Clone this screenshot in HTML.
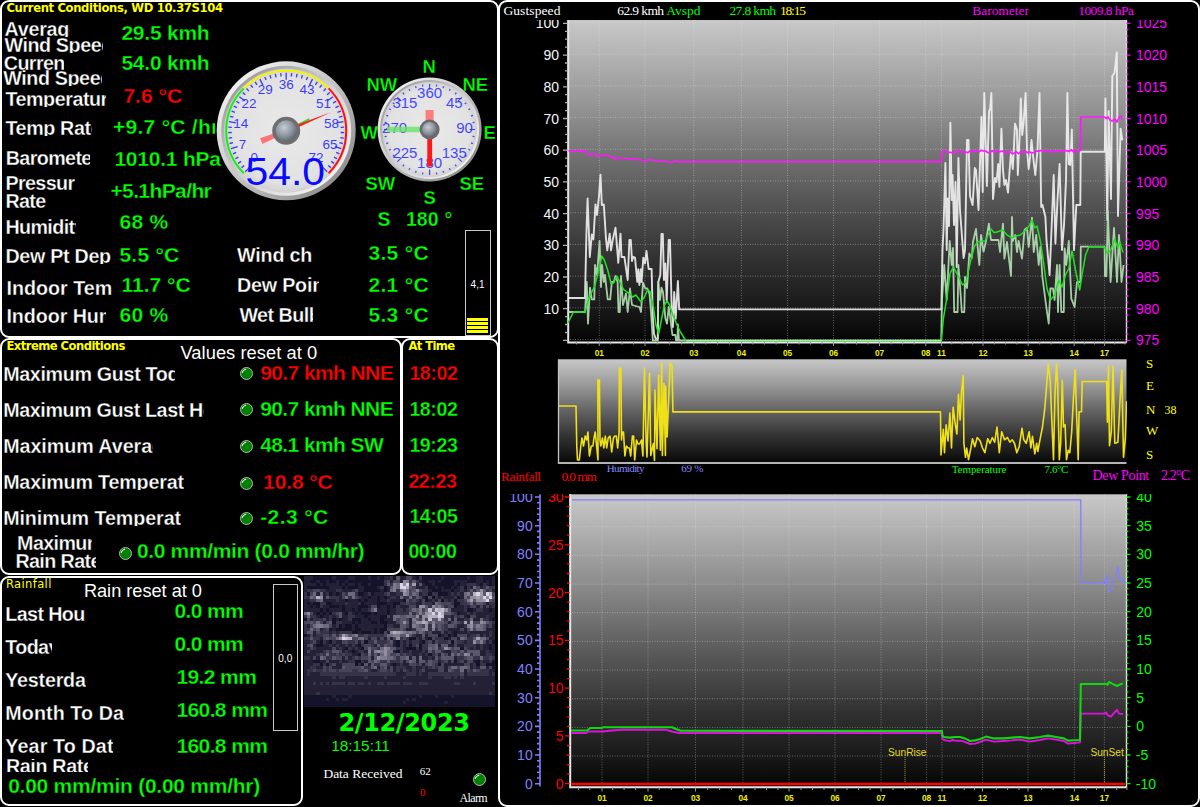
<!DOCTYPE html>
<html lang="en"><head><meta charset="utf-8"><title>Weather Display</title>
<style>
html,body{margin:0;padding:0;background:#000}
body{width:1200px;height:807px;position:relative;overflow:hidden;font-family:"Liberation Sans",Arial,sans-serif}
.t{position:absolute;white-space:nowrap}
.c{position:absolute;overflow:hidden}
.p{position:absolute;border:2px solid #fff;border-radius:9px;box-sizing:content-box}
.bx{position:absolute;border:1px solid #c8c8c8}
.led{position:absolute;width:11px;height:11px;border-radius:50%;border:1px solid #b8b0b8;background:#008200}
.led::after{content:'';position:absolute;left:1.2px;top:1.2px;width:6px;height:6px;border-radius:50%;border:1.4px solid transparent;border-top-color:#f4fff4;transform:rotate(-42deg)}
.b{-webkit-text-stroke:0.3px #000}
svg{position:absolute;left:0;top:0}
</style></head>
<body>
<svg width="200" height="140" viewBox="300 572 200 140" style="left:300px;top:572px" shape-rendering="crispEdges">
<rect x="303.5" y="576.3" width="191.5" height="130.5" fill="#15132a"/>
<path d="M303.5 576.3h3.2v3.2h-3.2zM306.7 576.3h3.2v3.2h-3.2zM309.9 576.3h3.2v3.2h-3.2zM332.3 576.3h3.2v3.2h-3.2zM348.3 576.3h3.2v3.2h-3.2zM351.5 576.3h3.2v3.2h-3.2zM367.5 576.3h3.2v3.2h-3.2zM377.1 576.3h3.2v3.2h-3.2zM383.5 576.3h3.2v3.2h-3.2zM386.7 576.3h3.2v3.2h-3.2zM399.5 576.3h3.2v3.2h-3.2zM402.7 576.3h3.2v3.2h-3.2zM412.3 576.3h3.2v3.2h-3.2zM441.1 576.3h3.2v3.2h-3.2zM466.7 576.3h3.2v3.2h-3.2zM476.3 576.3h3.2v3.2h-3.2zM479.5 576.3h3.2v3.2h-3.2zM492.3 576.3h3.2v3.2h-3.2zM303.5 579.5h3.2v3.2h-3.2zM306.7 579.5h3.2v3.2h-3.2zM316.3 579.5h3.2v3.2h-3.2zM325.9 579.5h3.2v3.2h-3.2zM335.5 579.5h3.2v3.2h-3.2zM345.1 579.5h3.2v3.2h-3.2zM389.9 579.5h3.2v3.2h-3.2zM399.5 579.5h3.2v3.2h-3.2zM418.7 579.5h3.2v3.2h-3.2zM428.3 579.5h3.2v3.2h-3.2zM431.5 579.5h3.2v3.2h-3.2zM437.9 579.5h3.2v3.2h-3.2zM453.9 579.5h3.2v3.2h-3.2zM457.1 579.5h3.2v3.2h-3.2zM460.3 579.5h3.2v3.2h-3.2zM463.5 579.5h3.2v3.2h-3.2zM476.3 579.5h3.2v3.2h-3.2zM479.5 579.5h3.2v3.2h-3.2zM485.9 579.5h3.2v3.2h-3.2zM492.3 579.5h3.2v3.2h-3.2zM303.5 582.7h3.2v3.2h-3.2zM306.7 582.7h3.2v3.2h-3.2zM309.9 582.7h3.2v3.2h-3.2zM313.1 582.7h3.2v3.2h-3.2zM319.5 582.7h3.2v3.2h-3.2zM325.9 582.7h3.2v3.2h-3.2zM329.1 582.7h3.2v3.2h-3.2zM332.3 582.7h3.2v3.2h-3.2zM335.5 582.7h3.2v3.2h-3.2zM341.9 582.7h3.2v3.2h-3.2zM348.3 582.7h3.2v3.2h-3.2zM351.5 582.7h3.2v3.2h-3.2zM357.9 582.7h3.2v3.2h-3.2zM367.5 582.7h3.2v3.2h-3.2zM415.5 582.7h3.2v3.2h-3.2zM421.9 582.7h3.2v3.2h-3.2zM431.5 582.7h3.2v3.2h-3.2zM453.9 582.7h3.2v3.2h-3.2zM460.3 582.7h3.2v3.2h-3.2zM463.5 582.7h3.2v3.2h-3.2zM476.3 582.7h3.2v3.2h-3.2zM485.9 582.7h3.2v3.2h-3.2zM492.3 582.7h3.2v3.2h-3.2zM303.5 585.9h3.2v3.2h-3.2zM329.1 585.9h3.2v3.2h-3.2zM332.3 585.9h3.2v3.2h-3.2zM335.5 585.9h3.2v3.2h-3.2zM338.7 585.9h3.2v3.2h-3.2zM345.1 585.9h3.2v3.2h-3.2zM357.9 585.9h3.2v3.2h-3.2zM361.1 585.9h3.2v3.2h-3.2zM377.1 585.9h3.2v3.2h-3.2zM386.7 585.9h3.2v3.2h-3.2zM415.5 585.9h3.2v3.2h-3.2zM418.7 585.9h3.2v3.2h-3.2zM421.9 585.9h3.2v3.2h-3.2zM434.7 585.9h3.2v3.2h-3.2zM441.1 585.9h3.2v3.2h-3.2zM450.7 585.9h3.2v3.2h-3.2zM457.1 585.9h3.2v3.2h-3.2zM469.9 585.9h3.2v3.2h-3.2zM479.5 585.9h3.2v3.2h-3.2zM303.5 589.1h3.2v3.2h-3.2zM325.9 589.1h3.2v3.2h-3.2zM329.1 589.1h3.2v3.2h-3.2zM332.3 589.1h3.2v3.2h-3.2zM341.9 589.1h3.2v3.2h-3.2zM345.1 589.1h3.2v3.2h-3.2zM348.3 589.1h3.2v3.2h-3.2zM357.9 589.1h3.2v3.2h-3.2zM361.1 589.1h3.2v3.2h-3.2zM380.3 589.1h3.2v3.2h-3.2zM386.7 589.1h3.2v3.2h-3.2zM428.3 589.1h3.2v3.2h-3.2zM441.1 589.1h3.2v3.2h-3.2zM444.3 589.1h3.2v3.2h-3.2zM447.5 589.1h3.2v3.2h-3.2zM453.9 589.1h3.2v3.2h-3.2zM457.1 589.1h3.2v3.2h-3.2zM463.5 589.1h3.2v3.2h-3.2zM492.3 589.1h3.2v3.2h-3.2zM316.3 592.3h3.2v3.2h-3.2zM322.7 592.3h3.2v3.2h-3.2zM332.3 592.3h3.2v3.2h-3.2zM338.7 592.3h3.2v3.2h-3.2zM364.3 592.3h3.2v3.2h-3.2zM373.9 592.3h3.2v3.2h-3.2zM377.1 592.3h3.2v3.2h-3.2zM380.3 592.3h3.2v3.2h-3.2zM389.9 592.3h3.2v3.2h-3.2zM393.1 592.3h3.2v3.2h-3.2zM418.7 592.3h3.2v3.2h-3.2zM447.5 592.3h3.2v3.2h-3.2zM453.9 592.3h3.2v3.2h-3.2zM460.3 592.3h3.2v3.2h-3.2zM322.7 595.5h3.2v3.2h-3.2zM338.7 595.5h3.2v3.2h-3.2zM361.1 595.5h3.2v3.2h-3.2zM364.3 595.5h3.2v3.2h-3.2zM370.7 595.5h3.2v3.2h-3.2zM373.9 595.5h3.2v3.2h-3.2zM380.3 595.5h3.2v3.2h-3.2zM386.7 595.5h3.2v3.2h-3.2zM396.3 595.5h3.2v3.2h-3.2zM421.9 595.5h3.2v3.2h-3.2zM437.9 595.5h3.2v3.2h-3.2zM444.3 595.5h3.2v3.2h-3.2zM447.5 595.5h3.2v3.2h-3.2zM450.7 595.5h3.2v3.2h-3.2zM460.3 595.5h3.2v3.2h-3.2zM303.5 598.7h3.2v3.2h-3.2zM306.7 598.7h3.2v3.2h-3.2zM322.7 598.7h3.2v3.2h-3.2zM325.9 598.7h3.2v3.2h-3.2zM329.1 598.7h3.2v3.2h-3.2zM332.3 598.7h3.2v3.2h-3.2zM338.7 598.7h3.2v3.2h-3.2zM341.9 598.7h3.2v3.2h-3.2zM348.3 598.7h3.2v3.2h-3.2zM351.5 598.7h3.2v3.2h-3.2zM354.7 598.7h3.2v3.2h-3.2zM361.1 598.7h3.2v3.2h-3.2zM367.5 598.7h3.2v3.2h-3.2zM370.7 598.7h3.2v3.2h-3.2zM373.9 598.7h3.2v3.2h-3.2zM380.3 598.7h3.2v3.2h-3.2zM383.5 598.7h3.2v3.2h-3.2zM389.9 598.7h3.2v3.2h-3.2zM393.1 598.7h3.2v3.2h-3.2zM396.3 598.7h3.2v3.2h-3.2zM399.5 598.7h3.2v3.2h-3.2zM418.7 598.7h3.2v3.2h-3.2zM428.3 598.7h3.2v3.2h-3.2zM434.7 598.7h3.2v3.2h-3.2zM447.5 598.7h3.2v3.2h-3.2zM303.5 601.9h3.2v3.2h-3.2zM309.9 601.9h3.2v3.2h-3.2zM332.3 601.9h3.2v3.2h-3.2zM335.5 601.9h3.2v3.2h-3.2zM338.7 601.9h3.2v3.2h-3.2zM341.9 601.9h3.2v3.2h-3.2zM348.3 601.9h3.2v3.2h-3.2zM351.5 601.9h3.2v3.2h-3.2zM354.7 601.9h3.2v3.2h-3.2zM364.3 601.9h3.2v3.2h-3.2zM367.5 601.9h3.2v3.2h-3.2zM370.7 601.9h3.2v3.2h-3.2zM373.9 601.9h3.2v3.2h-3.2zM386.7 601.9h3.2v3.2h-3.2zM389.9 601.9h3.2v3.2h-3.2zM415.5 601.9h3.2v3.2h-3.2zM418.7 601.9h3.2v3.2h-3.2zM431.5 601.9h3.2v3.2h-3.2zM485.9 601.9h3.2v3.2h-3.2zM303.5 605.1h3.2v3.2h-3.2zM306.7 605.1h3.2v3.2h-3.2zM313.1 605.1h3.2v3.2h-3.2zM322.7 605.1h3.2v3.2h-3.2zM325.9 605.1h3.2v3.2h-3.2zM338.7 605.1h3.2v3.2h-3.2zM345.1 605.1h3.2v3.2h-3.2zM348.3 605.1h3.2v3.2h-3.2zM351.5 605.1h3.2v3.2h-3.2zM354.7 605.1h3.2v3.2h-3.2zM367.5 605.1h3.2v3.2h-3.2zM380.3 605.1h3.2v3.2h-3.2zM383.5 605.1h3.2v3.2h-3.2zM389.9 605.1h3.2v3.2h-3.2zM399.5 605.1h3.2v3.2h-3.2zM402.7 605.1h3.2v3.2h-3.2zM405.9 605.1h3.2v3.2h-3.2zM415.5 605.1h3.2v3.2h-3.2zM457.1 605.1h3.2v3.2h-3.2zM460.3 605.1h3.2v3.2h-3.2zM466.7 605.1h3.2v3.2h-3.2zM476.3 605.1h3.2v3.2h-3.2zM482.7 605.1h3.2v3.2h-3.2zM489.1 605.1h3.2v3.2h-3.2zM303.5 608.3h3.2v3.2h-3.2zM306.7 608.3h3.2v3.2h-3.2zM309.9 608.3h3.2v3.2h-3.2zM313.1 608.3h3.2v3.2h-3.2zM316.3 608.3h3.2v3.2h-3.2zM322.7 608.3h3.2v3.2h-3.2zM329.1 608.3h3.2v3.2h-3.2zM332.3 608.3h3.2v3.2h-3.2zM335.5 608.3h3.2v3.2h-3.2zM338.7 608.3h3.2v3.2h-3.2zM345.1 608.3h3.2v3.2h-3.2zM348.3 608.3h3.2v3.2h-3.2zM354.7 608.3h3.2v3.2h-3.2zM361.1 608.3h3.2v3.2h-3.2zM364.3 608.3h3.2v3.2h-3.2zM377.1 608.3h3.2v3.2h-3.2zM380.3 608.3h3.2v3.2h-3.2zM383.5 608.3h3.2v3.2h-3.2zM389.9 608.3h3.2v3.2h-3.2zM393.1 608.3h3.2v3.2h-3.2zM402.7 608.3h3.2v3.2h-3.2zM450.7 608.3h3.2v3.2h-3.2zM453.9 608.3h3.2v3.2h-3.2zM457.1 608.3h3.2v3.2h-3.2zM460.3 608.3h3.2v3.2h-3.2zM473.1 608.3h3.2v3.2h-3.2zM482.7 608.3h3.2v3.2h-3.2zM485.9 608.3h3.2v3.2h-3.2zM492.3 608.3h3.2v3.2h-3.2zM313.1 611.5h3.2v3.2h-3.2zM319.5 611.5h3.2v3.2h-3.2zM325.9 611.5h3.2v3.2h-3.2zM341.9 611.5h3.2v3.2h-3.2zM351.5 611.5h3.2v3.2h-3.2zM357.9 611.5h3.2v3.2h-3.2zM370.7 611.5h3.2v3.2h-3.2zM377.1 611.5h3.2v3.2h-3.2zM380.3 611.5h3.2v3.2h-3.2zM383.5 611.5h3.2v3.2h-3.2zM389.9 611.5h3.2v3.2h-3.2zM393.1 611.5h3.2v3.2h-3.2zM460.3 611.5h3.2v3.2h-3.2zM463.5 611.5h3.2v3.2h-3.2zM469.9 611.5h3.2v3.2h-3.2zM476.3 611.5h3.2v3.2h-3.2zM479.5 611.5h3.2v3.2h-3.2zM482.7 611.5h3.2v3.2h-3.2zM485.9 611.5h3.2v3.2h-3.2zM489.1 611.5h3.2v3.2h-3.2zM492.3 611.5h3.2v3.2h-3.2zM316.3 614.7h3.2v3.2h-3.2zM322.7 614.7h3.2v3.2h-3.2zM325.9 614.7h3.2v3.2h-3.2zM332.3 614.7h3.2v3.2h-3.2zM341.9 614.7h3.2v3.2h-3.2zM345.1 614.7h3.2v3.2h-3.2zM354.7 614.7h3.2v3.2h-3.2zM357.9 614.7h3.2v3.2h-3.2zM361.1 614.7h3.2v3.2h-3.2zM367.5 614.7h3.2v3.2h-3.2zM370.7 614.7h3.2v3.2h-3.2zM373.9 614.7h3.2v3.2h-3.2zM377.1 614.7h3.2v3.2h-3.2zM389.9 614.7h3.2v3.2h-3.2zM450.7 614.7h3.2v3.2h-3.2zM463.5 614.7h3.2v3.2h-3.2zM476.3 614.7h3.2v3.2h-3.2zM479.5 614.7h3.2v3.2h-3.2zM482.7 614.7h3.2v3.2h-3.2zM489.1 614.7h3.2v3.2h-3.2zM492.3 614.7h3.2v3.2h-3.2zM309.9 617.9h3.2v3.2h-3.2zM325.9 617.9h3.2v3.2h-3.2zM335.5 617.9h3.2v3.2h-3.2zM341.9 617.9h3.2v3.2h-3.2zM345.1 617.9h3.2v3.2h-3.2zM361.1 617.9h3.2v3.2h-3.2zM364.3 617.9h3.2v3.2h-3.2zM370.7 617.9h3.2v3.2h-3.2zM373.9 617.9h3.2v3.2h-3.2zM377.1 617.9h3.2v3.2h-3.2zM383.5 617.9h3.2v3.2h-3.2zM386.7 617.9h3.2v3.2h-3.2zM389.9 617.9h3.2v3.2h-3.2zM409.1 617.9h3.2v3.2h-3.2zM450.7 617.9h3.2v3.2h-3.2zM457.1 617.9h3.2v3.2h-3.2zM460.3 617.9h3.2v3.2h-3.2zM473.1 617.9h3.2v3.2h-3.2zM476.3 617.9h3.2v3.2h-3.2zM489.1 617.9h3.2v3.2h-3.2zM322.7 621.1h3.2v3.2h-3.2zM341.9 621.1h3.2v3.2h-3.2zM345.1 621.1h3.2v3.2h-3.2zM348.3 621.1h3.2v3.2h-3.2zM354.7 621.1h3.2v3.2h-3.2zM361.1 621.1h3.2v3.2h-3.2zM364.3 621.1h3.2v3.2h-3.2zM367.5 621.1h3.2v3.2h-3.2zM377.1 621.1h3.2v3.2h-3.2zM386.7 621.1h3.2v3.2h-3.2zM389.9 621.1h3.2v3.2h-3.2zM393.1 621.1h3.2v3.2h-3.2zM409.1 621.1h3.2v3.2h-3.2zM447.5 621.1h3.2v3.2h-3.2zM306.7 624.3h3.2v3.2h-3.2zM332.3 624.3h3.2v3.2h-3.2zM341.9 624.3h3.2v3.2h-3.2zM351.5 624.3h3.2v3.2h-3.2zM357.9 624.3h3.2v3.2h-3.2zM361.1 624.3h3.2v3.2h-3.2zM364.3 624.3h3.2v3.2h-3.2zM367.5 624.3h3.2v3.2h-3.2zM370.7 624.3h3.2v3.2h-3.2zM373.9 624.3h3.2v3.2h-3.2zM377.1 624.3h3.2v3.2h-3.2zM380.3 624.3h3.2v3.2h-3.2zM393.1 624.3h3.2v3.2h-3.2zM396.3 624.3h3.2v3.2h-3.2zM409.1 624.3h3.2v3.2h-3.2zM457.1 624.3h3.2v3.2h-3.2zM460.3 624.3h3.2v3.2h-3.2zM492.3 624.3h3.2v3.2h-3.2zM319.5 627.5h3.2v3.2h-3.2zM332.3 627.5h3.2v3.2h-3.2zM351.5 627.5h3.2v3.2h-3.2zM361.1 627.5h3.2v3.2h-3.2zM364.3 627.5h3.2v3.2h-3.2zM367.5 627.5h3.2v3.2h-3.2zM370.7 627.5h3.2v3.2h-3.2zM377.1 627.5h3.2v3.2h-3.2zM405.9 627.5h3.2v3.2h-3.2zM409.1 627.5h3.2v3.2h-3.2zM447.5 627.5h3.2v3.2h-3.2zM450.7 627.5h3.2v3.2h-3.2zM453.9 627.5h3.2v3.2h-3.2zM457.1 627.5h3.2v3.2h-3.2zM463.5 627.5h3.2v3.2h-3.2zM485.9 627.5h3.2v3.2h-3.2zM489.1 627.5h3.2v3.2h-3.2zM492.3 627.5h3.2v3.2h-3.2zM313.1 630.7h3.2v3.2h-3.2zM329.1 630.7h3.2v3.2h-3.2zM335.5 630.7h3.2v3.2h-3.2zM357.9 630.7h3.2v3.2h-3.2zM370.7 630.7h3.2v3.2h-3.2zM377.1 630.7h3.2v3.2h-3.2zM386.7 630.7h3.2v3.2h-3.2zM431.5 630.7h3.2v3.2h-3.2zM434.7 630.7h3.2v3.2h-3.2zM437.9 630.7h3.2v3.2h-3.2zM444.3 630.7h3.2v3.2h-3.2zM450.7 630.7h3.2v3.2h-3.2zM457.1 630.7h3.2v3.2h-3.2zM460.3 630.7h3.2v3.2h-3.2zM463.5 630.7h3.2v3.2h-3.2zM469.9 630.7h3.2v3.2h-3.2zM473.1 630.7h3.2v3.2h-3.2zM476.3 630.7h3.2v3.2h-3.2zM479.5 630.7h3.2v3.2h-3.2zM482.7 630.7h3.2v3.2h-3.2zM485.9 630.7h3.2v3.2h-3.2zM492.3 630.7h3.2v3.2h-3.2zM306.7 633.9h3.2v3.2h-3.2zM313.1 633.9h3.2v3.2h-3.2zM415.5 633.9h3.2v3.2h-3.2zM418.7 633.9h3.2v3.2h-3.2zM425.1 633.9h3.2v3.2h-3.2zM441.1 633.9h3.2v3.2h-3.2zM450.7 633.9h3.2v3.2h-3.2zM466.7 633.9h3.2v3.2h-3.2zM479.5 633.9h3.2v3.2h-3.2zM485.9 633.9h3.2v3.2h-3.2zM492.3 633.9h3.2v3.2h-3.2zM319.5 637.1h3.2v3.2h-3.2zM367.5 637.1h3.2v3.2h-3.2zM377.1 637.1h3.2v3.2h-3.2zM383.5 637.1h3.2v3.2h-3.2zM389.9 637.1h3.2v3.2h-3.2zM418.7 637.1h3.2v3.2h-3.2zM425.1 637.1h3.2v3.2h-3.2zM447.5 637.1h3.2v3.2h-3.2zM457.1 637.1h3.2v3.2h-3.2zM489.1 637.1h3.2v3.2h-3.2zM492.3 637.1h3.2v3.2h-3.2zM303.5 640.3h3.2v3.2h-3.2zM306.7 640.3h3.2v3.2h-3.2zM316.3 640.3h3.2v3.2h-3.2zM325.9 640.3h3.2v3.2h-3.2zM335.5 640.3h3.2v3.2h-3.2zM338.7 640.3h3.2v3.2h-3.2zM357.9 640.3h3.2v3.2h-3.2zM393.1 640.3h3.2v3.2h-3.2zM402.7 640.3h3.2v3.2h-3.2zM409.1 640.3h3.2v3.2h-3.2zM418.7 640.3h3.2v3.2h-3.2zM431.5 640.3h3.2v3.2h-3.2zM463.5 640.3h3.2v3.2h-3.2zM485.9 640.3h3.2v3.2h-3.2zM303.5 643.5h3.2v3.2h-3.2zM313.1 643.5h3.2v3.2h-3.2zM322.7 643.5h3.2v3.2h-3.2zM325.9 643.5h3.2v3.2h-3.2zM332.3 643.5h3.2v3.2h-3.2zM338.7 643.5h3.2v3.2h-3.2zM341.9 643.5h3.2v3.2h-3.2zM348.3 643.5h3.2v3.2h-3.2zM354.7 643.5h3.2v3.2h-3.2zM373.9 643.5h3.2v3.2h-3.2zM393.1 643.5h3.2v3.2h-3.2zM402.7 643.5h3.2v3.2h-3.2zM437.9 643.5h3.2v3.2h-3.2zM447.5 643.5h3.2v3.2h-3.2zM450.7 643.5h3.2v3.2h-3.2zM457.1 643.5h3.2v3.2h-3.2zM460.3 643.5h3.2v3.2h-3.2zM476.3 643.5h3.2v3.2h-3.2zM482.7 643.5h3.2v3.2h-3.2zM485.9 643.5h3.2v3.2h-3.2zM492.3 643.5h3.2v3.2h-3.2zM303.5 646.7h3.2v3.2h-3.2zM306.7 646.7h3.2v3.2h-3.2zM316.3 646.7h3.2v3.2h-3.2zM319.5 646.7h3.2v3.2h-3.2zM322.7 646.7h3.2v3.2h-3.2zM325.9 646.7h3.2v3.2h-3.2zM329.1 646.7h3.2v3.2h-3.2zM335.5 646.7h3.2v3.2h-3.2zM341.9 646.7h3.2v3.2h-3.2zM351.5 646.7h3.2v3.2h-3.2zM357.9 646.7h3.2v3.2h-3.2zM402.7 646.7h3.2v3.2h-3.2zM469.9 646.7h3.2v3.2h-3.2zM476.3 646.7h3.2v3.2h-3.2zM482.7 646.7h3.2v3.2h-3.2zM485.9 646.7h3.2v3.2h-3.2zM492.3 646.7h3.2v3.2h-3.2zM303.5 649.9h3.2v3.2h-3.2zM309.9 649.9h3.2v3.2h-3.2zM313.1 649.9h3.2v3.2h-3.2zM316.3 649.9h3.2v3.2h-3.2zM319.5 649.9h3.2v3.2h-3.2zM341.9 649.9h3.2v3.2h-3.2zM348.3 649.9h3.2v3.2h-3.2zM354.7 649.9h3.2v3.2h-3.2zM364.3 649.9h3.2v3.2h-3.2zM393.1 649.9h3.2v3.2h-3.2zM402.7 649.9h3.2v3.2h-3.2zM405.9 649.9h3.2v3.2h-3.2zM412.3 649.9h3.2v3.2h-3.2zM415.5 649.9h3.2v3.2h-3.2zM418.7 649.9h3.2v3.2h-3.2zM425.1 649.9h3.2v3.2h-3.2zM444.3 649.9h3.2v3.2h-3.2zM447.5 649.9h3.2v3.2h-3.2zM479.5 649.9h3.2v3.2h-3.2zM482.7 649.9h3.2v3.2h-3.2zM489.1 649.9h3.2v3.2h-3.2zM492.3 649.9h3.2v3.2h-3.2zM303.5 653.1h3.2v3.2h-3.2zM306.7 653.1h3.2v3.2h-3.2zM309.9 653.1h3.2v3.2h-3.2zM313.1 653.1h3.2v3.2h-3.2zM351.5 653.1h3.2v3.2h-3.2zM354.7 653.1h3.2v3.2h-3.2zM412.3 653.1h3.2v3.2h-3.2zM415.5 653.1h3.2v3.2h-3.2zM421.9 653.1h3.2v3.2h-3.2zM437.9 653.1h3.2v3.2h-3.2zM447.5 653.1h3.2v3.2h-3.2zM479.5 653.1h3.2v3.2h-3.2zM482.7 653.1h3.2v3.2h-3.2zM492.3 653.1h3.2v3.2h-3.2zM309.9 656.3h3.2v3.2h-3.2zM316.3 656.3h3.2v3.2h-3.2zM341.9 656.3h3.2v3.2h-3.2zM348.3 656.3h3.2v3.2h-3.2zM370.7 656.3h3.2v3.2h-3.2zM409.1 656.3h3.2v3.2h-3.2zM415.5 656.3h3.2v3.2h-3.2zM421.9 656.3h3.2v3.2h-3.2zM425.1 656.3h3.2v3.2h-3.2zM431.5 656.3h3.2v3.2h-3.2zM453.9 656.3h3.2v3.2h-3.2zM303.5 659.5h3.2v3.2h-3.2zM306.7 659.5h3.2v3.2h-3.2zM309.9 659.5h3.2v3.2h-3.2zM319.5 659.5h3.2v3.2h-3.2zM322.7 659.5h3.2v3.2h-3.2zM329.1 659.5h3.2v3.2h-3.2zM332.3 659.5h3.2v3.2h-3.2zM335.5 659.5h3.2v3.2h-3.2zM341.9 659.5h3.2v3.2h-3.2zM345.1 659.5h3.2v3.2h-3.2zM364.3 659.5h3.2v3.2h-3.2zM402.7 659.5h3.2v3.2h-3.2zM415.5 659.5h3.2v3.2h-3.2zM437.9 659.5h3.2v3.2h-3.2zM447.5 659.5h3.2v3.2h-3.2zM463.5 659.5h3.2v3.2h-3.2zM473.1 659.5h3.2v3.2h-3.2zM482.7 659.5h3.2v3.2h-3.2zM485.9 659.5h3.2v3.2h-3.2zM303.5 662.7h3.2v3.2h-3.2zM306.7 662.7h3.2v3.2h-3.2zM309.9 662.7h3.2v3.2h-3.2zM335.5 662.7h3.2v3.2h-3.2zM338.7 662.7h3.2v3.2h-3.2zM367.5 662.7h3.2v3.2h-3.2zM389.9 662.7h3.2v3.2h-3.2zM396.3 662.7h3.2v3.2h-3.2zM402.7 662.7h3.2v3.2h-3.2zM405.9 662.7h3.2v3.2h-3.2zM421.9 662.7h3.2v3.2h-3.2zM444.3 662.7h3.2v3.2h-3.2zM447.5 662.7h3.2v3.2h-3.2zM450.7 662.7h3.2v3.2h-3.2zM453.9 662.7h3.2v3.2h-3.2zM457.1 662.7h3.2v3.2h-3.2zM460.3 662.7h3.2v3.2h-3.2zM469.9 662.7h3.2v3.2h-3.2zM303.5 665.9h3.2v3.2h-3.2zM306.7 665.9h3.2v3.2h-3.2zM316.3 665.9h3.2v3.2h-3.2zM319.5 665.9h3.2v3.2h-3.2zM332.3 665.9h3.2v3.2h-3.2zM335.5 665.9h3.2v3.2h-3.2zM338.7 665.9h3.2v3.2h-3.2zM377.1 665.9h3.2v3.2h-3.2zM386.7 665.9h3.2v3.2h-3.2zM393.1 665.9h3.2v3.2h-3.2zM405.9 665.9h3.2v3.2h-3.2zM409.1 665.9h3.2v3.2h-3.2zM415.5 665.9h3.2v3.2h-3.2zM418.7 665.9h3.2v3.2h-3.2zM425.1 665.9h3.2v3.2h-3.2zM444.3 665.9h3.2v3.2h-3.2zM469.9 665.9h3.2v3.2h-3.2zM476.3 665.9h3.2v3.2h-3.2zM485.9 665.9h3.2v3.2h-3.2zM303.5 669.1h3.2v3.2h-3.2zM370.7 669.1h3.2v3.2h-3.2zM373.9 669.1h3.2v3.2h-3.2zM393.1 669.1h3.2v3.2h-3.2zM399.5 669.1h3.2v3.2h-3.2zM409.1 669.1h3.2v3.2h-3.2zM415.5 669.1h3.2v3.2h-3.2zM425.1 669.1h3.2v3.2h-3.2zM428.3 669.1h3.2v3.2h-3.2zM431.5 669.1h3.2v3.2h-3.2zM434.7 669.1h3.2v3.2h-3.2zM444.3 669.1h3.2v3.2h-3.2zM463.5 669.1h3.2v3.2h-3.2zM489.1 669.1h3.2v3.2h-3.2zM492.3 669.1h3.2v3.2h-3.2zM303.5 672.3h3.2v3.2h-3.2zM309.9 672.3h3.2v3.2h-3.2zM313.1 672.3h3.2v3.2h-3.2zM316.3 672.3h3.2v3.2h-3.2zM396.3 672.3h3.2v3.2h-3.2zM399.5 672.3h3.2v3.2h-3.2zM402.7 672.3h3.2v3.2h-3.2zM415.5 672.3h3.2v3.2h-3.2zM421.9 672.3h3.2v3.2h-3.2zM425.1 672.3h3.2v3.2h-3.2zM463.5 672.3h3.2v3.2h-3.2zM489.1 672.3h3.2v3.2h-3.2zM303.5 675.5h3.2v3.2h-3.2zM306.7 675.5h3.2v3.2h-3.2zM309.9 675.5h3.2v3.2h-3.2zM313.1 675.5h3.2v3.2h-3.2zM316.3 675.5h3.2v3.2h-3.2zM319.5 675.5h3.2v3.2h-3.2zM322.7 675.5h3.2v3.2h-3.2zM325.9 675.5h3.2v3.2h-3.2zM329.1 675.5h3.2v3.2h-3.2zM335.5 675.5h3.2v3.2h-3.2zM345.1 675.5h3.2v3.2h-3.2zM348.3 675.5h3.2v3.2h-3.2zM351.5 675.5h3.2v3.2h-3.2zM354.7 675.5h3.2v3.2h-3.2zM357.9 675.5h3.2v3.2h-3.2zM361.1 675.5h3.2v3.2h-3.2zM367.5 675.5h3.2v3.2h-3.2zM370.7 675.5h3.2v3.2h-3.2zM373.9 675.5h3.2v3.2h-3.2zM377.1 675.5h3.2v3.2h-3.2zM380.3 675.5h3.2v3.2h-3.2zM386.7 675.5h3.2v3.2h-3.2zM389.9 675.5h3.2v3.2h-3.2zM393.1 675.5h3.2v3.2h-3.2zM396.3 675.5h3.2v3.2h-3.2zM399.5 675.5h3.2v3.2h-3.2zM405.9 675.5h3.2v3.2h-3.2zM409.1 675.5h3.2v3.2h-3.2zM412.3 675.5h3.2v3.2h-3.2zM415.5 675.5h3.2v3.2h-3.2zM418.7 675.5h3.2v3.2h-3.2zM421.9 675.5h3.2v3.2h-3.2zM425.1 675.5h3.2v3.2h-3.2zM431.5 675.5h3.2v3.2h-3.2zM434.7 675.5h3.2v3.2h-3.2zM437.9 675.5h3.2v3.2h-3.2zM441.1 675.5h3.2v3.2h-3.2zM450.7 675.5h3.2v3.2h-3.2zM457.1 675.5h3.2v3.2h-3.2zM463.5 675.5h3.2v3.2h-3.2zM466.7 675.5h3.2v3.2h-3.2zM469.9 675.5h3.2v3.2h-3.2zM473.1 675.5h3.2v3.2h-3.2zM476.3 675.5h3.2v3.2h-3.2zM479.5 675.5h3.2v3.2h-3.2zM482.7 675.5h3.2v3.2h-3.2zM485.9 675.5h3.2v3.2h-3.2zM489.1 675.5h3.2v3.2h-3.2zM492.3 675.5h3.2v3.2h-3.2zM303.5 678.7h3.2v3.2h-3.2zM306.7 678.7h3.2v3.2h-3.2zM309.9 678.7h3.2v3.2h-3.2zM313.1 678.7h3.2v3.2h-3.2zM316.3 678.7h3.2v3.2h-3.2zM319.5 678.7h3.2v3.2h-3.2zM322.7 678.7h3.2v3.2h-3.2zM325.9 678.7h3.2v3.2h-3.2zM329.1 678.7h3.2v3.2h-3.2zM332.3 678.7h3.2v3.2h-3.2zM335.5 678.7h3.2v3.2h-3.2zM338.7 678.7h3.2v3.2h-3.2zM341.9 678.7h3.2v3.2h-3.2zM345.1 678.7h3.2v3.2h-3.2zM348.3 678.7h3.2v3.2h-3.2zM351.5 678.7h3.2v3.2h-3.2zM354.7 678.7h3.2v3.2h-3.2zM357.9 678.7h3.2v3.2h-3.2zM361.1 678.7h3.2v3.2h-3.2zM364.3 678.7h3.2v3.2h-3.2zM367.5 678.7h3.2v3.2h-3.2zM370.7 678.7h3.2v3.2h-3.2zM373.9 678.7h3.2v3.2h-3.2zM377.1 678.7h3.2v3.2h-3.2zM380.3 678.7h3.2v3.2h-3.2zM383.5 678.7h3.2v3.2h-3.2zM386.7 678.7h3.2v3.2h-3.2zM389.9 678.7h3.2v3.2h-3.2zM393.1 678.7h3.2v3.2h-3.2zM396.3 678.7h3.2v3.2h-3.2zM399.5 678.7h3.2v3.2h-3.2zM402.7 678.7h3.2v3.2h-3.2zM405.9 678.7h3.2v3.2h-3.2zM409.1 678.7h3.2v3.2h-3.2zM412.3 678.7h3.2v3.2h-3.2zM415.5 678.7h3.2v3.2h-3.2zM418.7 678.7h3.2v3.2h-3.2zM421.9 678.7h3.2v3.2h-3.2zM425.1 678.7h3.2v3.2h-3.2zM428.3 678.7h3.2v3.2h-3.2zM431.5 678.7h3.2v3.2h-3.2zM434.7 678.7h3.2v3.2h-3.2zM437.9 678.7h3.2v3.2h-3.2zM441.1 678.7h3.2v3.2h-3.2zM444.3 678.7h3.2v3.2h-3.2zM447.5 678.7h3.2v3.2h-3.2zM450.7 678.7h3.2v3.2h-3.2zM453.9 678.7h3.2v3.2h-3.2zM457.1 678.7h3.2v3.2h-3.2zM460.3 678.7h3.2v3.2h-3.2zM463.5 678.7h3.2v3.2h-3.2zM466.7 678.7h3.2v3.2h-3.2zM469.9 678.7h3.2v3.2h-3.2zM473.1 678.7h3.2v3.2h-3.2zM476.3 678.7h3.2v3.2h-3.2zM479.5 678.7h3.2v3.2h-3.2zM482.7 678.7h3.2v3.2h-3.2zM485.9 678.7h3.2v3.2h-3.2zM489.1 678.7h3.2v3.2h-3.2zM492.3 678.7h3.2v3.2h-3.2zM303.5 681.9h3.2v3.2h-3.2zM306.7 681.9h3.2v3.2h-3.2zM309.9 681.9h3.2v3.2h-3.2zM316.3 681.9h3.2v3.2h-3.2zM322.7 681.9h3.2v3.2h-3.2zM329.1 681.9h3.2v3.2h-3.2zM345.1 681.9h3.2v3.2h-3.2zM354.7 681.9h3.2v3.2h-3.2zM364.3 681.9h3.2v3.2h-3.2zM370.7 681.9h3.2v3.2h-3.2zM373.9 681.9h3.2v3.2h-3.2zM383.5 681.9h3.2v3.2h-3.2zM399.5 681.9h3.2v3.2h-3.2zM412.3 681.9h3.2v3.2h-3.2zM415.5 681.9h3.2v3.2h-3.2zM428.3 681.9h3.2v3.2h-3.2zM431.5 681.9h3.2v3.2h-3.2zM434.7 681.9h3.2v3.2h-3.2zM437.9 681.9h3.2v3.2h-3.2zM441.1 681.9h3.2v3.2h-3.2zM444.3 681.9h3.2v3.2h-3.2zM447.5 681.9h3.2v3.2h-3.2zM450.7 681.9h3.2v3.2h-3.2zM460.3 681.9h3.2v3.2h-3.2zM463.5 681.9h3.2v3.2h-3.2zM466.7 681.9h3.2v3.2h-3.2zM469.9 681.9h3.2v3.2h-3.2zM476.3 681.9h3.2v3.2h-3.2zM479.5 681.9h3.2v3.2h-3.2zM482.7 681.9h3.2v3.2h-3.2zM485.9 681.9h3.2v3.2h-3.2zM489.1 681.9h3.2v3.2h-3.2zM303.5 685.1h3.2v3.2h-3.2zM306.7 685.1h3.2v3.2h-3.2zM309.9 685.1h3.2v3.2h-3.2zM313.1 685.1h3.2v3.2h-3.2zM316.3 685.1h3.2v3.2h-3.2zM319.5 685.1h3.2v3.2h-3.2zM322.7 685.1h3.2v3.2h-3.2zM325.9 685.1h3.2v3.2h-3.2zM329.1 685.1h3.2v3.2h-3.2zM332.3 685.1h3.2v3.2h-3.2zM335.5 685.1h3.2v3.2h-3.2zM338.7 685.1h3.2v3.2h-3.2zM341.9 685.1h3.2v3.2h-3.2zM345.1 685.1h3.2v3.2h-3.2zM348.3 685.1h3.2v3.2h-3.2zM351.5 685.1h3.2v3.2h-3.2zM354.7 685.1h3.2v3.2h-3.2zM357.9 685.1h3.2v3.2h-3.2zM361.1 685.1h3.2v3.2h-3.2zM364.3 685.1h3.2v3.2h-3.2zM367.5 685.1h3.2v3.2h-3.2zM370.7 685.1h3.2v3.2h-3.2zM373.9 685.1h3.2v3.2h-3.2zM377.1 685.1h3.2v3.2h-3.2zM380.3 685.1h3.2v3.2h-3.2zM383.5 685.1h3.2v3.2h-3.2zM386.7 685.1h3.2v3.2h-3.2zM389.9 685.1h3.2v3.2h-3.2zM393.1 685.1h3.2v3.2h-3.2zM396.3 685.1h3.2v3.2h-3.2zM399.5 685.1h3.2v3.2h-3.2zM402.7 685.1h3.2v3.2h-3.2zM405.9 685.1h3.2v3.2h-3.2zM409.1 685.1h3.2v3.2h-3.2zM412.3 685.1h3.2v3.2h-3.2zM415.5 685.1h3.2v3.2h-3.2zM418.7 685.1h3.2v3.2h-3.2zM421.9 685.1h3.2v3.2h-3.2zM425.1 685.1h3.2v3.2h-3.2zM428.3 685.1h3.2v3.2h-3.2zM431.5 685.1h3.2v3.2h-3.2zM434.7 685.1h3.2v3.2h-3.2zM437.9 685.1h3.2v3.2h-3.2zM441.1 685.1h3.2v3.2h-3.2zM444.3 685.1h3.2v3.2h-3.2zM447.5 685.1h3.2v3.2h-3.2zM450.7 685.1h3.2v3.2h-3.2zM453.9 685.1h3.2v3.2h-3.2zM457.1 685.1h3.2v3.2h-3.2zM460.3 685.1h3.2v3.2h-3.2zM463.5 685.1h3.2v3.2h-3.2zM466.7 685.1h3.2v3.2h-3.2zM469.9 685.1h3.2v3.2h-3.2zM473.1 685.1h3.2v3.2h-3.2zM476.3 685.1h3.2v3.2h-3.2zM479.5 685.1h3.2v3.2h-3.2zM482.7 685.1h3.2v3.2h-3.2zM485.9 685.1h3.2v3.2h-3.2zM489.1 685.1h3.2v3.2h-3.2zM492.3 685.1h3.2v3.2h-3.2zM303.5 688.3h3.2v3.2h-3.2zM306.7 688.3h3.2v3.2h-3.2zM309.9 688.3h3.2v3.2h-3.2zM313.1 688.3h3.2v3.2h-3.2zM316.3 688.3h3.2v3.2h-3.2zM319.5 688.3h3.2v3.2h-3.2zM322.7 688.3h3.2v3.2h-3.2zM325.9 688.3h3.2v3.2h-3.2zM329.1 688.3h3.2v3.2h-3.2zM332.3 688.3h3.2v3.2h-3.2zM335.5 688.3h3.2v3.2h-3.2zM338.7 688.3h3.2v3.2h-3.2zM341.9 688.3h3.2v3.2h-3.2zM345.1 688.3h3.2v3.2h-3.2zM348.3 688.3h3.2v3.2h-3.2zM351.5 688.3h3.2v3.2h-3.2zM354.7 688.3h3.2v3.2h-3.2zM357.9 688.3h3.2v3.2h-3.2zM361.1 688.3h3.2v3.2h-3.2zM364.3 688.3h3.2v3.2h-3.2zM367.5 688.3h3.2v3.2h-3.2zM370.7 688.3h3.2v3.2h-3.2zM373.9 688.3h3.2v3.2h-3.2zM377.1 688.3h3.2v3.2h-3.2zM380.3 688.3h3.2v3.2h-3.2zM383.5 688.3h3.2v3.2h-3.2zM386.7 688.3h3.2v3.2h-3.2zM389.9 688.3h3.2v3.2h-3.2zM393.1 688.3h3.2v3.2h-3.2zM396.3 688.3h3.2v3.2h-3.2zM399.5 688.3h3.2v3.2h-3.2zM402.7 688.3h3.2v3.2h-3.2zM405.9 688.3h3.2v3.2h-3.2zM409.1 688.3h3.2v3.2h-3.2zM412.3 688.3h3.2v3.2h-3.2zM415.5 688.3h3.2v3.2h-3.2zM418.7 688.3h3.2v3.2h-3.2zM421.9 688.3h3.2v3.2h-3.2zM425.1 688.3h3.2v3.2h-3.2zM428.3 688.3h3.2v3.2h-3.2zM431.5 688.3h3.2v3.2h-3.2zM434.7 688.3h3.2v3.2h-3.2zM437.9 688.3h3.2v3.2h-3.2zM441.1 688.3h3.2v3.2h-3.2zM444.3 688.3h3.2v3.2h-3.2zM447.5 688.3h3.2v3.2h-3.2zM450.7 688.3h3.2v3.2h-3.2zM453.9 688.3h3.2v3.2h-3.2zM457.1 688.3h3.2v3.2h-3.2zM460.3 688.3h3.2v3.2h-3.2zM463.5 688.3h3.2v3.2h-3.2zM466.7 688.3h3.2v3.2h-3.2zM469.9 688.3h3.2v3.2h-3.2zM473.1 688.3h3.2v3.2h-3.2zM476.3 688.3h3.2v3.2h-3.2zM479.5 688.3h3.2v3.2h-3.2zM482.7 688.3h3.2v3.2h-3.2zM485.9 688.3h3.2v3.2h-3.2zM489.1 688.3h3.2v3.2h-3.2zM492.3 688.3h3.2v3.2h-3.2zM303.5 691.5h3.2v3.2h-3.2zM306.7 691.5h3.2v3.2h-3.2zM309.9 691.5h3.2v3.2h-3.2zM313.1 691.5h3.2v3.2h-3.2zM319.5 691.5h3.2v3.2h-3.2zM322.7 691.5h3.2v3.2h-3.2zM325.9 691.5h3.2v3.2h-3.2zM329.1 691.5h3.2v3.2h-3.2zM332.3 691.5h3.2v3.2h-3.2zM335.5 691.5h3.2v3.2h-3.2zM338.7 691.5h3.2v3.2h-3.2zM341.9 691.5h3.2v3.2h-3.2zM345.1 691.5h3.2v3.2h-3.2zM348.3 691.5h3.2v3.2h-3.2zM351.5 691.5h3.2v3.2h-3.2zM354.7 691.5h3.2v3.2h-3.2zM357.9 691.5h3.2v3.2h-3.2zM361.1 691.5h3.2v3.2h-3.2zM364.3 691.5h3.2v3.2h-3.2zM367.5 691.5h3.2v3.2h-3.2zM370.7 691.5h3.2v3.2h-3.2zM373.9 691.5h3.2v3.2h-3.2zM377.1 691.5h3.2v3.2h-3.2zM380.3 691.5h3.2v3.2h-3.2zM383.5 691.5h3.2v3.2h-3.2zM386.7 691.5h3.2v3.2h-3.2zM389.9 691.5h3.2v3.2h-3.2zM393.1 691.5h3.2v3.2h-3.2zM396.3 691.5h3.2v3.2h-3.2zM399.5 691.5h3.2v3.2h-3.2zM402.7 691.5h3.2v3.2h-3.2zM405.9 691.5h3.2v3.2h-3.2zM409.1 691.5h3.2v3.2h-3.2zM412.3 691.5h3.2v3.2h-3.2zM415.5 691.5h3.2v3.2h-3.2zM418.7 691.5h3.2v3.2h-3.2zM421.9 691.5h3.2v3.2h-3.2zM425.1 691.5h3.2v3.2h-3.2zM428.3 691.5h3.2v3.2h-3.2zM431.5 691.5h3.2v3.2h-3.2zM434.7 691.5h3.2v3.2h-3.2zM437.9 691.5h3.2v3.2h-3.2zM441.1 691.5h3.2v3.2h-3.2zM444.3 691.5h3.2v3.2h-3.2zM447.5 691.5h3.2v3.2h-3.2zM450.7 691.5h3.2v3.2h-3.2zM453.9 691.5h3.2v3.2h-3.2zM457.1 691.5h3.2v3.2h-3.2zM460.3 691.5h3.2v3.2h-3.2zM463.5 691.5h3.2v3.2h-3.2zM466.7 691.5h3.2v3.2h-3.2zM469.9 691.5h3.2v3.2h-3.2zM473.1 691.5h3.2v3.2h-3.2zM476.3 691.5h3.2v3.2h-3.2zM479.5 691.5h3.2v3.2h-3.2zM482.7 691.5h3.2v3.2h-3.2zM485.9 691.5h3.2v3.2h-3.2zM492.3 691.5h3.2v3.2h-3.2zM332.3 694.7h3.2v3.2h-3.2zM348.3 694.7h3.2v3.2h-3.2zM418.7 694.7h3.2v3.2h-3.2zM434.7 694.7h3.2v3.2h-3.2zM450.7 694.7h3.2v3.2h-3.2zM325.9 697.9h3.2v3.2h-3.2zM335.5 697.9h3.2v3.2h-3.2zM341.9 697.9h3.2v3.2h-3.2zM345.1 697.9h3.2v3.2h-3.2zM405.9 697.9h3.2v3.2h-3.2zM412.3 697.9h3.2v3.2h-3.2zM402.7 701.1h3.2v3.2h-3.2zM444.3 701.1h3.2v3.2h-3.2z" fill="#242137"/>
<path d="M389.9 576.3h3.2v3.2h-3.2zM418.7 576.3h3.2v3.2h-3.2zM383.5 579.5h3.2v3.2h-3.2zM409.1 579.5h3.2v3.2h-3.2zM415.5 579.5h3.2v3.2h-3.2zM383.5 582.7h3.2v3.2h-3.2zM389.9 582.7h3.2v3.2h-3.2zM466.7 582.7h3.2v3.2h-3.2zM469.9 582.7h3.2v3.2h-3.2zM473.1 582.7h3.2v3.2h-3.2zM482.7 582.7h3.2v3.2h-3.2zM380.3 585.9h3.2v3.2h-3.2zM425.1 585.9h3.2v3.2h-3.2zM460.3 585.9h3.2v3.2h-3.2zM466.7 585.9h3.2v3.2h-3.2zM482.7 585.9h3.2v3.2h-3.2zM489.1 585.9h3.2v3.2h-3.2zM492.3 585.9h3.2v3.2h-3.2zM306.7 589.1h3.2v3.2h-3.2zM309.9 589.1h3.2v3.2h-3.2zM319.5 589.1h3.2v3.2h-3.2zM322.7 589.1h3.2v3.2h-3.2zM335.5 589.1h3.2v3.2h-3.2zM338.7 589.1h3.2v3.2h-3.2zM351.5 589.1h3.2v3.2h-3.2zM396.3 589.1h3.2v3.2h-3.2zM421.9 589.1h3.2v3.2h-3.2zM425.1 589.1h3.2v3.2h-3.2zM460.3 589.1h3.2v3.2h-3.2zM466.7 589.1h3.2v3.2h-3.2zM473.1 589.1h3.2v3.2h-3.2zM485.9 589.1h3.2v3.2h-3.2zM303.5 592.3h3.2v3.2h-3.2zM325.9 592.3h3.2v3.2h-3.2zM345.1 592.3h3.2v3.2h-3.2zM354.7 592.3h3.2v3.2h-3.2zM367.5 592.3h3.2v3.2h-3.2zM383.5 592.3h3.2v3.2h-3.2zM396.3 592.3h3.2v3.2h-3.2zM399.5 592.3h3.2v3.2h-3.2zM421.9 592.3h3.2v3.2h-3.2zM425.1 592.3h3.2v3.2h-3.2zM431.5 592.3h3.2v3.2h-3.2zM434.7 592.3h3.2v3.2h-3.2zM450.7 592.3h3.2v3.2h-3.2zM457.1 592.3h3.2v3.2h-3.2zM303.5 595.5h3.2v3.2h-3.2zM306.7 595.5h3.2v3.2h-3.2zM329.1 595.5h3.2v3.2h-3.2zM332.3 595.5h3.2v3.2h-3.2zM335.5 595.5h3.2v3.2h-3.2zM348.3 595.5h3.2v3.2h-3.2zM357.9 595.5h3.2v3.2h-3.2zM389.9 595.5h3.2v3.2h-3.2zM393.1 595.5h3.2v3.2h-3.2zM402.7 595.5h3.2v3.2h-3.2zM405.9 595.5h3.2v3.2h-3.2zM412.3 595.5h3.2v3.2h-3.2zM434.7 595.5h3.2v3.2h-3.2zM441.1 595.5h3.2v3.2h-3.2zM453.9 595.5h3.2v3.2h-3.2zM309.9 598.7h3.2v3.2h-3.2zM313.1 598.7h3.2v3.2h-3.2zM335.5 598.7h3.2v3.2h-3.2zM386.7 598.7h3.2v3.2h-3.2zM409.1 598.7h3.2v3.2h-3.2zM415.5 598.7h3.2v3.2h-3.2zM431.5 598.7h3.2v3.2h-3.2zM444.3 598.7h3.2v3.2h-3.2zM450.7 598.7h3.2v3.2h-3.2zM457.1 598.7h3.2v3.2h-3.2zM460.3 598.7h3.2v3.2h-3.2zM319.5 601.9h3.2v3.2h-3.2zM322.7 601.9h3.2v3.2h-3.2zM345.1 601.9h3.2v3.2h-3.2zM357.9 601.9h3.2v3.2h-3.2zM399.5 601.9h3.2v3.2h-3.2zM402.7 601.9h3.2v3.2h-3.2zM409.1 601.9h3.2v3.2h-3.2zM412.3 601.9h3.2v3.2h-3.2zM425.1 601.9h3.2v3.2h-3.2zM428.3 601.9h3.2v3.2h-3.2zM450.7 601.9h3.2v3.2h-3.2zM460.3 601.9h3.2v3.2h-3.2zM463.5 601.9h3.2v3.2h-3.2zM473.1 601.9h3.2v3.2h-3.2zM489.1 601.9h3.2v3.2h-3.2zM492.3 601.9h3.2v3.2h-3.2zM319.5 605.1h3.2v3.2h-3.2zM396.3 605.1h3.2v3.2h-3.2zM428.3 605.1h3.2v3.2h-3.2zM444.3 605.1h3.2v3.2h-3.2zM463.5 605.1h3.2v3.2h-3.2zM492.3 605.1h3.2v3.2h-3.2zM367.5 608.3h3.2v3.2h-3.2zM396.3 608.3h3.2v3.2h-3.2zM399.5 608.3h3.2v3.2h-3.2zM405.9 608.3h3.2v3.2h-3.2zM463.5 608.3h3.2v3.2h-3.2zM476.3 608.3h3.2v3.2h-3.2zM479.5 608.3h3.2v3.2h-3.2zM332.3 611.5h3.2v3.2h-3.2zM348.3 611.5h3.2v3.2h-3.2zM396.3 611.5h3.2v3.2h-3.2zM399.5 611.5h3.2v3.2h-3.2zM402.7 611.5h3.2v3.2h-3.2zM405.9 611.5h3.2v3.2h-3.2zM412.3 611.5h3.2v3.2h-3.2zM453.9 611.5h3.2v3.2h-3.2zM466.7 611.5h3.2v3.2h-3.2zM473.1 611.5h3.2v3.2h-3.2zM303.5 614.7h3.2v3.2h-3.2zM309.9 614.7h3.2v3.2h-3.2zM313.1 614.7h3.2v3.2h-3.2zM329.1 614.7h3.2v3.2h-3.2zM335.5 614.7h3.2v3.2h-3.2zM348.3 614.7h3.2v3.2h-3.2zM351.5 614.7h3.2v3.2h-3.2zM418.7 614.7h3.2v3.2h-3.2zM444.3 614.7h3.2v3.2h-3.2zM447.5 614.7h3.2v3.2h-3.2zM457.1 614.7h3.2v3.2h-3.2zM485.9 614.7h3.2v3.2h-3.2zM313.1 617.9h3.2v3.2h-3.2zM316.3 617.9h3.2v3.2h-3.2zM319.5 617.9h3.2v3.2h-3.2zM329.1 617.9h3.2v3.2h-3.2zM348.3 617.9h3.2v3.2h-3.2zM444.3 617.9h3.2v3.2h-3.2zM463.5 617.9h3.2v3.2h-3.2zM466.7 617.9h3.2v3.2h-3.2zM482.7 617.9h3.2v3.2h-3.2zM485.9 617.9h3.2v3.2h-3.2zM335.5 621.1h3.2v3.2h-3.2zM338.7 621.1h3.2v3.2h-3.2zM460.3 621.1h3.2v3.2h-3.2zM466.7 621.1h3.2v3.2h-3.2zM492.3 621.1h3.2v3.2h-3.2zM303.5 624.3h3.2v3.2h-3.2zM335.5 624.3h3.2v3.2h-3.2zM386.7 624.3h3.2v3.2h-3.2zM389.9 624.3h3.2v3.2h-3.2zM428.3 624.3h3.2v3.2h-3.2zM444.3 624.3h3.2v3.2h-3.2zM463.5 624.3h3.2v3.2h-3.2zM485.9 624.3h3.2v3.2h-3.2zM303.5 627.5h3.2v3.2h-3.2zM306.7 627.5h3.2v3.2h-3.2zM322.7 627.5h3.2v3.2h-3.2zM412.3 627.5h3.2v3.2h-3.2zM428.3 627.5h3.2v3.2h-3.2zM434.7 627.5h3.2v3.2h-3.2zM444.3 627.5h3.2v3.2h-3.2zM303.5 630.7h3.2v3.2h-3.2zM319.5 630.7h3.2v3.2h-3.2zM322.7 630.7h3.2v3.2h-3.2zM325.9 630.7h3.2v3.2h-3.2zM332.3 630.7h3.2v3.2h-3.2zM338.7 630.7h3.2v3.2h-3.2zM341.9 630.7h3.2v3.2h-3.2zM345.1 630.7h3.2v3.2h-3.2zM348.3 630.7h3.2v3.2h-3.2zM425.1 630.7h3.2v3.2h-3.2zM447.5 630.7h3.2v3.2h-3.2zM466.7 630.7h3.2v3.2h-3.2zM489.1 630.7h3.2v3.2h-3.2zM316.3 633.9h3.2v3.2h-3.2zM319.5 633.9h3.2v3.2h-3.2zM329.1 633.9h3.2v3.2h-3.2zM335.5 633.9h3.2v3.2h-3.2zM357.9 633.9h3.2v3.2h-3.2zM361.1 633.9h3.2v3.2h-3.2zM367.5 633.9h3.2v3.2h-3.2zM370.7 633.9h3.2v3.2h-3.2zM373.9 633.9h3.2v3.2h-3.2zM377.1 633.9h3.2v3.2h-3.2zM380.3 633.9h3.2v3.2h-3.2zM412.3 633.9h3.2v3.2h-3.2zM444.3 633.9h3.2v3.2h-3.2zM469.9 633.9h3.2v3.2h-3.2zM473.1 633.9h3.2v3.2h-3.2zM482.7 633.9h3.2v3.2h-3.2zM489.1 633.9h3.2v3.2h-3.2zM303.5 637.1h3.2v3.2h-3.2zM306.7 637.1h3.2v3.2h-3.2zM313.1 637.1h3.2v3.2h-3.2zM316.3 637.1h3.2v3.2h-3.2zM399.5 637.1h3.2v3.2h-3.2zM405.9 637.1h3.2v3.2h-3.2zM415.5 637.1h3.2v3.2h-3.2zM434.7 637.1h3.2v3.2h-3.2zM437.9 637.1h3.2v3.2h-3.2zM441.1 637.1h3.2v3.2h-3.2zM466.7 637.1h3.2v3.2h-3.2zM469.9 637.1h3.2v3.2h-3.2zM309.9 640.3h3.2v3.2h-3.2zM322.7 640.3h3.2v3.2h-3.2zM332.3 640.3h3.2v3.2h-3.2zM348.3 640.3h3.2v3.2h-3.2zM351.5 640.3h3.2v3.2h-3.2zM367.5 640.3h3.2v3.2h-3.2zM370.7 640.3h3.2v3.2h-3.2zM377.1 640.3h3.2v3.2h-3.2zM380.3 640.3h3.2v3.2h-3.2zM383.5 640.3h3.2v3.2h-3.2zM399.5 640.3h3.2v3.2h-3.2zM405.9 640.3h3.2v3.2h-3.2zM412.3 640.3h3.2v3.2h-3.2zM415.5 640.3h3.2v3.2h-3.2zM425.1 640.3h3.2v3.2h-3.2zM437.9 640.3h3.2v3.2h-3.2zM441.1 640.3h3.2v3.2h-3.2zM444.3 640.3h3.2v3.2h-3.2zM457.1 640.3h3.2v3.2h-3.2zM460.3 640.3h3.2v3.2h-3.2zM466.7 640.3h3.2v3.2h-3.2zM469.9 640.3h3.2v3.2h-3.2zM489.1 640.3h3.2v3.2h-3.2zM329.1 643.5h3.2v3.2h-3.2zM335.5 643.5h3.2v3.2h-3.2zM345.1 643.5h3.2v3.2h-3.2zM351.5 643.5h3.2v3.2h-3.2zM361.1 643.5h3.2v3.2h-3.2zM370.7 643.5h3.2v3.2h-3.2zM380.3 643.5h3.2v3.2h-3.2zM399.5 643.5h3.2v3.2h-3.2zM405.9 643.5h3.2v3.2h-3.2zM412.3 643.5h3.2v3.2h-3.2zM421.9 643.5h3.2v3.2h-3.2zM425.1 643.5h3.2v3.2h-3.2zM463.5 643.5h3.2v3.2h-3.2zM466.7 643.5h3.2v3.2h-3.2zM469.9 643.5h3.2v3.2h-3.2zM473.1 643.5h3.2v3.2h-3.2zM479.5 643.5h3.2v3.2h-3.2zM313.1 646.7h3.2v3.2h-3.2zM338.7 646.7h3.2v3.2h-3.2zM348.3 646.7h3.2v3.2h-3.2zM354.7 646.7h3.2v3.2h-3.2zM377.1 646.7h3.2v3.2h-3.2zM396.3 646.7h3.2v3.2h-3.2zM399.5 646.7h3.2v3.2h-3.2zM415.5 646.7h3.2v3.2h-3.2zM421.9 646.7h3.2v3.2h-3.2zM425.1 646.7h3.2v3.2h-3.2zM437.9 646.7h3.2v3.2h-3.2zM466.7 646.7h3.2v3.2h-3.2zM473.1 646.7h3.2v3.2h-3.2zM479.5 646.7h3.2v3.2h-3.2zM322.7 649.9h3.2v3.2h-3.2zM329.1 649.9h3.2v3.2h-3.2zM345.1 649.9h3.2v3.2h-3.2zM357.9 649.9h3.2v3.2h-3.2zM361.1 649.9h3.2v3.2h-3.2zM370.7 649.9h3.2v3.2h-3.2zM399.5 649.9h3.2v3.2h-3.2zM409.1 649.9h3.2v3.2h-3.2zM421.9 649.9h3.2v3.2h-3.2zM431.5 649.9h3.2v3.2h-3.2zM441.1 649.9h3.2v3.2h-3.2zM457.1 649.9h3.2v3.2h-3.2zM463.5 649.9h3.2v3.2h-3.2zM485.9 649.9h3.2v3.2h-3.2zM316.3 653.1h3.2v3.2h-3.2zM322.7 653.1h3.2v3.2h-3.2zM329.1 653.1h3.2v3.2h-3.2zM332.3 653.1h3.2v3.2h-3.2zM338.7 653.1h3.2v3.2h-3.2zM345.1 653.1h3.2v3.2h-3.2zM348.3 653.1h3.2v3.2h-3.2zM364.3 653.1h3.2v3.2h-3.2zM370.7 653.1h3.2v3.2h-3.2zM377.1 653.1h3.2v3.2h-3.2zM399.5 653.1h3.2v3.2h-3.2zM405.9 653.1h3.2v3.2h-3.2zM409.1 653.1h3.2v3.2h-3.2zM418.7 653.1h3.2v3.2h-3.2zM425.1 653.1h3.2v3.2h-3.2zM431.5 653.1h3.2v3.2h-3.2zM469.9 653.1h3.2v3.2h-3.2zM485.9 653.1h3.2v3.2h-3.2zM489.1 653.1h3.2v3.2h-3.2zM303.5 656.3h3.2v3.2h-3.2zM306.7 656.3h3.2v3.2h-3.2zM325.9 656.3h3.2v3.2h-3.2zM329.1 656.3h3.2v3.2h-3.2zM351.5 656.3h3.2v3.2h-3.2zM357.9 656.3h3.2v3.2h-3.2zM396.3 656.3h3.2v3.2h-3.2zM428.3 656.3h3.2v3.2h-3.2zM437.9 656.3h3.2v3.2h-3.2zM457.1 656.3h3.2v3.2h-3.2zM460.3 656.3h3.2v3.2h-3.2zM473.1 656.3h3.2v3.2h-3.2zM476.3 656.3h3.2v3.2h-3.2zM482.7 656.3h3.2v3.2h-3.2zM485.9 656.3h3.2v3.2h-3.2zM492.3 656.3h3.2v3.2h-3.2zM338.7 659.5h3.2v3.2h-3.2zM348.3 659.5h3.2v3.2h-3.2zM351.5 659.5h3.2v3.2h-3.2zM361.1 659.5h3.2v3.2h-3.2zM380.3 659.5h3.2v3.2h-3.2zM383.5 659.5h3.2v3.2h-3.2zM389.9 659.5h3.2v3.2h-3.2zM393.1 659.5h3.2v3.2h-3.2zM396.3 659.5h3.2v3.2h-3.2zM425.1 659.5h3.2v3.2h-3.2zM441.1 659.5h3.2v3.2h-3.2zM457.1 659.5h3.2v3.2h-3.2zM479.5 659.5h3.2v3.2h-3.2zM489.1 659.5h3.2v3.2h-3.2zM313.1 662.7h3.2v3.2h-3.2zM316.3 662.7h3.2v3.2h-3.2zM322.7 662.7h3.2v3.2h-3.2zM329.1 662.7h3.2v3.2h-3.2zM357.9 662.7h3.2v3.2h-3.2zM373.9 662.7h3.2v3.2h-3.2zM377.1 662.7h3.2v3.2h-3.2zM386.7 662.7h3.2v3.2h-3.2zM399.5 662.7h3.2v3.2h-3.2zM415.5 662.7h3.2v3.2h-3.2zM434.7 662.7h3.2v3.2h-3.2zM473.1 662.7h3.2v3.2h-3.2zM479.5 662.7h3.2v3.2h-3.2zM482.7 662.7h3.2v3.2h-3.2zM309.9 665.9h3.2v3.2h-3.2zM313.1 665.9h3.2v3.2h-3.2zM325.9 665.9h3.2v3.2h-3.2zM364.3 665.9h3.2v3.2h-3.2zM367.5 665.9h3.2v3.2h-3.2zM396.3 665.9h3.2v3.2h-3.2zM399.5 665.9h3.2v3.2h-3.2zM402.7 665.9h3.2v3.2h-3.2zM412.3 665.9h3.2v3.2h-3.2zM421.9 665.9h3.2v3.2h-3.2zM428.3 665.9h3.2v3.2h-3.2zM434.7 665.9h3.2v3.2h-3.2zM473.1 665.9h3.2v3.2h-3.2zM306.7 669.1h3.2v3.2h-3.2zM309.9 669.1h3.2v3.2h-3.2zM316.3 669.1h3.2v3.2h-3.2zM319.5 669.1h3.2v3.2h-3.2zM325.9 669.1h3.2v3.2h-3.2zM335.5 669.1h3.2v3.2h-3.2zM351.5 669.1h3.2v3.2h-3.2zM354.7 669.1h3.2v3.2h-3.2zM367.5 669.1h3.2v3.2h-3.2zM377.1 669.1h3.2v3.2h-3.2zM386.7 669.1h3.2v3.2h-3.2zM396.3 669.1h3.2v3.2h-3.2zM405.9 669.1h3.2v3.2h-3.2zM412.3 669.1h3.2v3.2h-3.2zM418.7 669.1h3.2v3.2h-3.2zM453.9 669.1h3.2v3.2h-3.2zM457.1 669.1h3.2v3.2h-3.2zM469.9 669.1h3.2v3.2h-3.2zM479.5 669.1h3.2v3.2h-3.2zM482.7 669.1h3.2v3.2h-3.2zM485.9 669.1h3.2v3.2h-3.2zM306.7 672.3h3.2v3.2h-3.2zM319.5 672.3h3.2v3.2h-3.2zM322.7 672.3h3.2v3.2h-3.2zM325.9 672.3h3.2v3.2h-3.2zM329.1 672.3h3.2v3.2h-3.2zM332.3 672.3h3.2v3.2h-3.2zM335.5 672.3h3.2v3.2h-3.2zM338.7 672.3h3.2v3.2h-3.2zM341.9 672.3h3.2v3.2h-3.2zM345.1 672.3h3.2v3.2h-3.2zM348.3 672.3h3.2v3.2h-3.2zM351.5 672.3h3.2v3.2h-3.2zM354.7 672.3h3.2v3.2h-3.2zM357.9 672.3h3.2v3.2h-3.2zM361.1 672.3h3.2v3.2h-3.2zM364.3 672.3h3.2v3.2h-3.2zM367.5 672.3h3.2v3.2h-3.2zM370.7 672.3h3.2v3.2h-3.2zM373.9 672.3h3.2v3.2h-3.2zM377.1 672.3h3.2v3.2h-3.2zM380.3 672.3h3.2v3.2h-3.2zM383.5 672.3h3.2v3.2h-3.2zM386.7 672.3h3.2v3.2h-3.2zM389.9 672.3h3.2v3.2h-3.2zM393.1 672.3h3.2v3.2h-3.2zM405.9 672.3h3.2v3.2h-3.2zM409.1 672.3h3.2v3.2h-3.2zM412.3 672.3h3.2v3.2h-3.2zM418.7 672.3h3.2v3.2h-3.2zM428.3 672.3h3.2v3.2h-3.2zM431.5 672.3h3.2v3.2h-3.2zM434.7 672.3h3.2v3.2h-3.2zM437.9 672.3h3.2v3.2h-3.2zM441.1 672.3h3.2v3.2h-3.2zM444.3 672.3h3.2v3.2h-3.2zM447.5 672.3h3.2v3.2h-3.2zM450.7 672.3h3.2v3.2h-3.2zM453.9 672.3h3.2v3.2h-3.2zM457.1 672.3h3.2v3.2h-3.2zM466.7 672.3h3.2v3.2h-3.2zM469.9 672.3h3.2v3.2h-3.2zM473.1 672.3h3.2v3.2h-3.2zM476.3 672.3h3.2v3.2h-3.2zM479.5 672.3h3.2v3.2h-3.2zM482.7 672.3h3.2v3.2h-3.2zM485.9 672.3h3.2v3.2h-3.2zM492.3 672.3h3.2v3.2h-3.2zM332.3 675.5h3.2v3.2h-3.2zM338.7 675.5h3.2v3.2h-3.2zM341.9 675.5h3.2v3.2h-3.2zM364.3 675.5h3.2v3.2h-3.2zM383.5 675.5h3.2v3.2h-3.2zM402.7 675.5h3.2v3.2h-3.2zM428.3 675.5h3.2v3.2h-3.2zM444.3 675.5h3.2v3.2h-3.2zM447.5 675.5h3.2v3.2h-3.2zM453.9 675.5h3.2v3.2h-3.2zM460.3 675.5h3.2v3.2h-3.2zM313.1 681.9h3.2v3.2h-3.2zM319.5 681.9h3.2v3.2h-3.2zM325.9 681.9h3.2v3.2h-3.2zM332.3 681.9h3.2v3.2h-3.2zM335.5 681.9h3.2v3.2h-3.2zM338.7 681.9h3.2v3.2h-3.2zM341.9 681.9h3.2v3.2h-3.2zM348.3 681.9h3.2v3.2h-3.2zM351.5 681.9h3.2v3.2h-3.2zM357.9 681.9h3.2v3.2h-3.2zM361.1 681.9h3.2v3.2h-3.2zM367.5 681.9h3.2v3.2h-3.2zM377.1 681.9h3.2v3.2h-3.2zM380.3 681.9h3.2v3.2h-3.2zM386.7 681.9h3.2v3.2h-3.2zM389.9 681.9h3.2v3.2h-3.2zM393.1 681.9h3.2v3.2h-3.2zM396.3 681.9h3.2v3.2h-3.2zM402.7 681.9h3.2v3.2h-3.2zM405.9 681.9h3.2v3.2h-3.2zM409.1 681.9h3.2v3.2h-3.2zM418.7 681.9h3.2v3.2h-3.2zM421.9 681.9h3.2v3.2h-3.2zM425.1 681.9h3.2v3.2h-3.2zM453.9 681.9h3.2v3.2h-3.2zM457.1 681.9h3.2v3.2h-3.2zM473.1 681.9h3.2v3.2h-3.2zM492.3 681.9h3.2v3.2h-3.2zM316.3 691.5h3.2v3.2h-3.2zM489.1 691.5h3.2v3.2h-3.2z" fill="#363348"/>
<path d="M405.9 576.3h3.2v3.2h-3.2zM409.1 576.3h3.2v3.2h-3.2zM386.7 579.5h3.2v3.2h-3.2zM393.1 579.5h3.2v3.2h-3.2zM396.3 579.5h3.2v3.2h-3.2zM409.1 582.7h3.2v3.2h-3.2zM412.3 585.9h3.2v3.2h-3.2zM476.3 585.9h3.2v3.2h-3.2zM313.1 589.1h3.2v3.2h-3.2zM316.3 589.1h3.2v3.2h-3.2zM354.7 589.1h3.2v3.2h-3.2zM409.1 589.1h3.2v3.2h-3.2zM418.7 589.1h3.2v3.2h-3.2zM489.1 589.1h3.2v3.2h-3.2zM309.9 592.3h3.2v3.2h-3.2zM341.9 592.3h3.2v3.2h-3.2zM386.7 592.3h3.2v3.2h-3.2zM409.1 592.3h3.2v3.2h-3.2zM469.9 592.3h3.2v3.2h-3.2zM492.3 592.3h3.2v3.2h-3.2zM341.9 595.5h3.2v3.2h-3.2zM354.7 595.5h3.2v3.2h-3.2zM418.7 595.5h3.2v3.2h-3.2zM428.3 595.5h3.2v3.2h-3.2zM466.7 595.5h3.2v3.2h-3.2zM412.3 598.7h3.2v3.2h-3.2zM421.9 598.7h3.2v3.2h-3.2zM437.9 598.7h3.2v3.2h-3.2zM463.5 598.7h3.2v3.2h-3.2zM492.3 598.7h3.2v3.2h-3.2zM405.9 601.9h3.2v3.2h-3.2zM421.9 601.9h3.2v3.2h-3.2zM441.1 601.9h3.2v3.2h-3.2zM444.3 601.9h3.2v3.2h-3.2zM447.5 601.9h3.2v3.2h-3.2zM466.7 601.9h3.2v3.2h-3.2zM482.7 601.9h3.2v3.2h-3.2zM370.7 605.1h3.2v3.2h-3.2zM373.9 605.1h3.2v3.2h-3.2zM409.1 605.1h3.2v3.2h-3.2zM412.3 605.1h3.2v3.2h-3.2zM447.5 605.1h3.2v3.2h-3.2zM450.7 605.1h3.2v3.2h-3.2zM469.9 605.1h3.2v3.2h-3.2zM473.1 605.1h3.2v3.2h-3.2zM479.5 605.1h3.2v3.2h-3.2zM485.9 605.1h3.2v3.2h-3.2zM409.1 608.3h3.2v3.2h-3.2zM421.9 608.3h3.2v3.2h-3.2zM309.9 611.5h3.2v3.2h-3.2zM335.5 611.5h3.2v3.2h-3.2zM450.7 611.5h3.2v3.2h-3.2zM386.7 614.7h3.2v3.2h-3.2zM453.9 614.7h3.2v3.2h-3.2zM460.3 614.7h3.2v3.2h-3.2zM469.9 614.7h3.2v3.2h-3.2zM473.1 614.7h3.2v3.2h-3.2zM306.7 617.9h3.2v3.2h-3.2zM322.7 617.9h3.2v3.2h-3.2zM396.3 617.9h3.2v3.2h-3.2zM405.9 617.9h3.2v3.2h-3.2zM418.7 617.9h3.2v3.2h-3.2zM425.1 617.9h3.2v3.2h-3.2zM303.5 621.1h3.2v3.2h-3.2zM306.7 621.1h3.2v3.2h-3.2zM313.1 621.1h3.2v3.2h-3.2zM319.5 621.1h3.2v3.2h-3.2zM325.9 621.1h3.2v3.2h-3.2zM396.3 621.1h3.2v3.2h-3.2zM444.3 621.1h3.2v3.2h-3.2zM450.7 621.1h3.2v3.2h-3.2zM457.1 621.1h3.2v3.2h-3.2zM473.1 621.1h3.2v3.2h-3.2zM476.3 621.1h3.2v3.2h-3.2zM489.1 621.1h3.2v3.2h-3.2zM309.9 624.3h3.2v3.2h-3.2zM329.1 624.3h3.2v3.2h-3.2zM405.9 624.3h3.2v3.2h-3.2zM421.9 624.3h3.2v3.2h-3.2zM434.7 624.3h3.2v3.2h-3.2zM441.1 624.3h3.2v3.2h-3.2zM453.9 624.3h3.2v3.2h-3.2zM489.1 624.3h3.2v3.2h-3.2zM313.1 627.5h3.2v3.2h-3.2zM325.9 627.5h3.2v3.2h-3.2zM386.7 627.5h3.2v3.2h-3.2zM389.9 627.5h3.2v3.2h-3.2zM393.1 627.5h3.2v3.2h-3.2zM396.3 627.5h3.2v3.2h-3.2zM402.7 627.5h3.2v3.2h-3.2zM441.1 627.5h3.2v3.2h-3.2zM460.3 627.5h3.2v3.2h-3.2zM466.7 627.5h3.2v3.2h-3.2zM473.1 627.5h3.2v3.2h-3.2zM316.3 630.7h3.2v3.2h-3.2zM383.5 630.7h3.2v3.2h-3.2zM415.5 630.7h3.2v3.2h-3.2zM428.3 630.7h3.2v3.2h-3.2zM441.1 630.7h3.2v3.2h-3.2zM309.9 633.9h3.2v3.2h-3.2zM322.7 633.9h3.2v3.2h-3.2zM325.9 633.9h3.2v3.2h-3.2zM364.3 633.9h3.2v3.2h-3.2zM383.5 633.9h3.2v3.2h-3.2zM428.3 633.9h3.2v3.2h-3.2zM431.5 633.9h3.2v3.2h-3.2zM434.7 633.9h3.2v3.2h-3.2zM457.1 633.9h3.2v3.2h-3.2zM460.3 633.9h3.2v3.2h-3.2zM463.5 633.9h3.2v3.2h-3.2zM476.3 633.9h3.2v3.2h-3.2zM322.7 637.1h3.2v3.2h-3.2zM329.1 637.1h3.2v3.2h-3.2zM332.3 637.1h3.2v3.2h-3.2zM351.5 637.1h3.2v3.2h-3.2zM354.7 637.1h3.2v3.2h-3.2zM364.3 637.1h3.2v3.2h-3.2zM370.7 637.1h3.2v3.2h-3.2zM373.9 637.1h3.2v3.2h-3.2zM380.3 637.1h3.2v3.2h-3.2zM393.1 637.1h3.2v3.2h-3.2zM402.7 637.1h3.2v3.2h-3.2zM421.9 637.1h3.2v3.2h-3.2zM431.5 637.1h3.2v3.2h-3.2zM450.7 637.1h3.2v3.2h-3.2zM453.9 637.1h3.2v3.2h-3.2zM485.9 637.1h3.2v3.2h-3.2zM313.1 640.3h3.2v3.2h-3.2zM341.9 640.3h3.2v3.2h-3.2zM345.1 640.3h3.2v3.2h-3.2zM354.7 640.3h3.2v3.2h-3.2zM361.1 640.3h3.2v3.2h-3.2zM386.7 640.3h3.2v3.2h-3.2zM428.3 640.3h3.2v3.2h-3.2zM434.7 640.3h3.2v3.2h-3.2zM447.5 640.3h3.2v3.2h-3.2zM453.9 640.3h3.2v3.2h-3.2zM482.7 640.3h3.2v3.2h-3.2zM306.7 643.5h3.2v3.2h-3.2zM364.3 643.5h3.2v3.2h-3.2zM367.5 643.5h3.2v3.2h-3.2zM386.7 643.5h3.2v3.2h-3.2zM389.9 643.5h3.2v3.2h-3.2zM415.5 643.5h3.2v3.2h-3.2zM453.9 643.5h3.2v3.2h-3.2zM309.9 646.7h3.2v3.2h-3.2zM332.3 646.7h3.2v3.2h-3.2zM364.3 646.7h3.2v3.2h-3.2zM370.7 646.7h3.2v3.2h-3.2zM373.9 646.7h3.2v3.2h-3.2zM441.1 646.7h3.2v3.2h-3.2zM450.7 646.7h3.2v3.2h-3.2zM463.5 646.7h3.2v3.2h-3.2zM306.7 649.9h3.2v3.2h-3.2zM325.9 649.9h3.2v3.2h-3.2zM338.7 649.9h3.2v3.2h-3.2zM450.7 649.9h3.2v3.2h-3.2zM453.9 649.9h3.2v3.2h-3.2zM319.5 653.1h3.2v3.2h-3.2zM335.5 653.1h3.2v3.2h-3.2zM341.9 653.1h3.2v3.2h-3.2zM361.1 653.1h3.2v3.2h-3.2zM389.9 653.1h3.2v3.2h-3.2zM393.1 653.1h3.2v3.2h-3.2zM402.7 653.1h3.2v3.2h-3.2zM434.7 653.1h3.2v3.2h-3.2zM444.3 653.1h3.2v3.2h-3.2zM453.9 653.1h3.2v3.2h-3.2zM460.3 653.1h3.2v3.2h-3.2zM313.1 656.3h3.2v3.2h-3.2zM335.5 656.3h3.2v3.2h-3.2zM338.7 656.3h3.2v3.2h-3.2zM345.1 656.3h3.2v3.2h-3.2zM354.7 656.3h3.2v3.2h-3.2zM361.1 656.3h3.2v3.2h-3.2zM364.3 656.3h3.2v3.2h-3.2zM463.5 656.3h3.2v3.2h-3.2zM489.1 656.3h3.2v3.2h-3.2zM325.9 659.5h3.2v3.2h-3.2zM370.7 659.5h3.2v3.2h-3.2zM399.5 659.5h3.2v3.2h-3.2zM405.9 659.5h3.2v3.2h-3.2zM431.5 659.5h3.2v3.2h-3.2zM434.7 659.5h3.2v3.2h-3.2zM444.3 659.5h3.2v3.2h-3.2zM450.7 659.5h3.2v3.2h-3.2zM460.3 659.5h3.2v3.2h-3.2zM466.7 659.5h3.2v3.2h-3.2zM469.9 659.5h3.2v3.2h-3.2zM332.3 662.7h3.2v3.2h-3.2zM341.9 662.7h3.2v3.2h-3.2zM345.1 662.7h3.2v3.2h-3.2zM348.3 662.7h3.2v3.2h-3.2zM351.5 662.7h3.2v3.2h-3.2zM409.1 662.7h3.2v3.2h-3.2zM412.3 662.7h3.2v3.2h-3.2zM418.7 662.7h3.2v3.2h-3.2zM425.1 662.7h3.2v3.2h-3.2zM431.5 662.7h3.2v3.2h-3.2zM441.1 662.7h3.2v3.2h-3.2zM463.5 662.7h3.2v3.2h-3.2zM466.7 662.7h3.2v3.2h-3.2zM322.7 665.9h3.2v3.2h-3.2zM329.1 665.9h3.2v3.2h-3.2zM345.1 665.9h3.2v3.2h-3.2zM348.3 665.9h3.2v3.2h-3.2zM351.5 665.9h3.2v3.2h-3.2zM354.7 665.9h3.2v3.2h-3.2zM357.9 665.9h3.2v3.2h-3.2zM380.3 665.9h3.2v3.2h-3.2zM389.9 665.9h3.2v3.2h-3.2zM431.5 665.9h3.2v3.2h-3.2zM437.9 665.9h3.2v3.2h-3.2zM441.1 665.9h3.2v3.2h-3.2zM447.5 665.9h3.2v3.2h-3.2zM457.1 665.9h3.2v3.2h-3.2zM489.1 665.9h3.2v3.2h-3.2zM313.1 669.1h3.2v3.2h-3.2zM322.7 669.1h3.2v3.2h-3.2zM329.1 669.1h3.2v3.2h-3.2zM332.3 669.1h3.2v3.2h-3.2zM338.7 669.1h3.2v3.2h-3.2zM341.9 669.1h3.2v3.2h-3.2zM345.1 669.1h3.2v3.2h-3.2zM348.3 669.1h3.2v3.2h-3.2zM357.9 669.1h3.2v3.2h-3.2zM361.1 669.1h3.2v3.2h-3.2zM380.3 669.1h3.2v3.2h-3.2zM383.5 669.1h3.2v3.2h-3.2zM389.9 669.1h3.2v3.2h-3.2zM402.7 669.1h3.2v3.2h-3.2zM421.9 669.1h3.2v3.2h-3.2zM437.9 669.1h3.2v3.2h-3.2zM441.1 669.1h3.2v3.2h-3.2zM450.7 669.1h3.2v3.2h-3.2zM466.7 669.1h3.2v3.2h-3.2zM476.3 669.1h3.2v3.2h-3.2zM460.3 672.3h3.2v3.2h-3.2z" fill="#484559"/>
<path d="M396.3 576.3h3.2v3.2h-3.2zM412.3 579.5h3.2v3.2h-3.2zM386.7 582.7h3.2v3.2h-3.2zM418.7 582.7h3.2v3.2h-3.2zM389.9 585.9h3.2v3.2h-3.2zM409.1 585.9h3.2v3.2h-3.2zM485.9 585.9h3.2v3.2h-3.2zM412.3 589.1h3.2v3.2h-3.2zM469.9 589.1h3.2v3.2h-3.2zM476.3 589.1h3.2v3.2h-3.2zM482.7 589.1h3.2v3.2h-3.2zM415.5 592.3h3.2v3.2h-3.2zM482.7 592.3h3.2v3.2h-3.2zM313.1 595.5h3.2v3.2h-3.2zM325.9 595.5h3.2v3.2h-3.2zM415.5 595.5h3.2v3.2h-3.2zM492.3 595.5h3.2v3.2h-3.2zM316.3 598.7h3.2v3.2h-3.2zM405.9 598.7h3.2v3.2h-3.2zM473.1 598.7h3.2v3.2h-3.2zM489.1 598.7h3.2v3.2h-3.2zM437.9 601.9h3.2v3.2h-3.2zM476.3 601.9h3.2v3.2h-3.2zM479.5 601.9h3.2v3.2h-3.2zM425.1 605.1h3.2v3.2h-3.2zM441.1 605.1h3.2v3.2h-3.2zM370.7 608.3h3.2v3.2h-3.2zM415.5 608.3h3.2v3.2h-3.2zM447.5 608.3h3.2v3.2h-3.2zM338.7 611.5h3.2v3.2h-3.2zM415.5 611.5h3.2v3.2h-3.2zM421.9 611.5h3.2v3.2h-3.2zM444.3 611.5h3.2v3.2h-3.2zM447.5 611.5h3.2v3.2h-3.2zM338.7 614.7h3.2v3.2h-3.2zM399.5 614.7h3.2v3.2h-3.2zM402.7 614.7h3.2v3.2h-3.2zM412.3 614.7h3.2v3.2h-3.2zM399.5 617.9h3.2v3.2h-3.2zM402.7 617.9h3.2v3.2h-3.2zM415.5 617.9h3.2v3.2h-3.2zM431.5 617.9h3.2v3.2h-3.2zM434.7 617.9h3.2v3.2h-3.2zM441.1 617.9h3.2v3.2h-3.2zM453.9 617.9h3.2v3.2h-3.2zM309.9 621.1h3.2v3.2h-3.2zM329.1 621.1h3.2v3.2h-3.2zM399.5 621.1h3.2v3.2h-3.2zM405.9 621.1h3.2v3.2h-3.2zM428.3 621.1h3.2v3.2h-3.2zM434.7 621.1h3.2v3.2h-3.2zM437.9 621.1h3.2v3.2h-3.2zM441.1 621.1h3.2v3.2h-3.2zM453.9 621.1h3.2v3.2h-3.2zM485.9 621.1h3.2v3.2h-3.2zM399.5 624.3h3.2v3.2h-3.2zM402.7 624.3h3.2v3.2h-3.2zM418.7 624.3h3.2v3.2h-3.2zM437.9 624.3h3.2v3.2h-3.2zM447.5 624.3h3.2v3.2h-3.2zM450.7 624.3h3.2v3.2h-3.2zM473.1 624.3h3.2v3.2h-3.2zM482.7 624.3h3.2v3.2h-3.2zM316.3 627.5h3.2v3.2h-3.2zM399.5 627.5h3.2v3.2h-3.2zM437.9 627.5h3.2v3.2h-3.2zM482.7 627.5h3.2v3.2h-3.2zM306.7 630.7h3.2v3.2h-3.2zM309.9 630.7h3.2v3.2h-3.2zM421.9 630.7h3.2v3.2h-3.2zM332.3 633.9h3.2v3.2h-3.2zM338.7 633.9h3.2v3.2h-3.2zM348.3 633.9h3.2v3.2h-3.2zM399.5 633.9h3.2v3.2h-3.2zM402.7 633.9h3.2v3.2h-3.2zM409.1 633.9h3.2v3.2h-3.2zM421.9 633.9h3.2v3.2h-3.2zM309.9 637.1h3.2v3.2h-3.2zM325.9 637.1h3.2v3.2h-3.2zM386.7 637.1h3.2v3.2h-3.2zM463.5 637.1h3.2v3.2h-3.2zM473.1 637.1h3.2v3.2h-3.2zM373.9 640.3h3.2v3.2h-3.2zM389.9 640.3h3.2v3.2h-3.2zM476.3 640.3h3.2v3.2h-3.2zM309.9 643.5h3.2v3.2h-3.2zM377.1 643.5h3.2v3.2h-3.2zM383.5 643.5h3.2v3.2h-3.2zM428.3 643.5h3.2v3.2h-3.2zM431.5 643.5h3.2v3.2h-3.2zM441.1 643.5h3.2v3.2h-3.2zM444.3 643.5h3.2v3.2h-3.2zM389.9 646.7h3.2v3.2h-3.2zM393.1 646.7h3.2v3.2h-3.2zM431.5 646.7h3.2v3.2h-3.2zM453.9 646.7h3.2v3.2h-3.2zM457.1 646.7h3.2v3.2h-3.2zM332.3 649.9h3.2v3.2h-3.2zM335.5 649.9h3.2v3.2h-3.2zM428.3 649.9h3.2v3.2h-3.2zM434.7 649.9h3.2v3.2h-3.2zM437.9 649.9h3.2v3.2h-3.2zM460.3 649.9h3.2v3.2h-3.2zM466.7 649.9h3.2v3.2h-3.2zM469.9 649.9h3.2v3.2h-3.2zM473.1 649.9h3.2v3.2h-3.2zM476.3 649.9h3.2v3.2h-3.2zM373.9 653.1h3.2v3.2h-3.2zM396.3 653.1h3.2v3.2h-3.2zM441.1 653.1h3.2v3.2h-3.2zM473.1 653.1h3.2v3.2h-3.2zM476.3 653.1h3.2v3.2h-3.2zM322.7 656.3h3.2v3.2h-3.2zM332.3 656.3h3.2v3.2h-3.2zM367.5 656.3h3.2v3.2h-3.2zM373.9 656.3h3.2v3.2h-3.2zM393.1 656.3h3.2v3.2h-3.2zM399.5 656.3h3.2v3.2h-3.2zM402.7 656.3h3.2v3.2h-3.2zM412.3 656.3h3.2v3.2h-3.2zM434.7 656.3h3.2v3.2h-3.2zM441.1 656.3h3.2v3.2h-3.2zM444.3 656.3h3.2v3.2h-3.2zM447.5 656.3h3.2v3.2h-3.2zM450.7 656.3h3.2v3.2h-3.2zM466.7 656.3h3.2v3.2h-3.2zM469.9 656.3h3.2v3.2h-3.2zM367.5 659.5h3.2v3.2h-3.2zM377.1 659.5h3.2v3.2h-3.2zM386.7 659.5h3.2v3.2h-3.2zM412.3 659.5h3.2v3.2h-3.2zM418.7 659.5h3.2v3.2h-3.2zM421.9 659.5h3.2v3.2h-3.2zM428.3 659.5h3.2v3.2h-3.2zM364.3 662.7h3.2v3.2h-3.2zM370.7 662.7h3.2v3.2h-3.2zM380.3 662.7h3.2v3.2h-3.2zM383.5 662.7h3.2v3.2h-3.2zM428.3 662.7h3.2v3.2h-3.2zM341.9 665.9h3.2v3.2h-3.2zM361.1 665.9h3.2v3.2h-3.2zM370.7 665.9h3.2v3.2h-3.2zM383.5 665.9h3.2v3.2h-3.2zM466.7 665.9h3.2v3.2h-3.2zM479.5 665.9h3.2v3.2h-3.2zM482.7 665.9h3.2v3.2h-3.2zM364.3 669.1h3.2v3.2h-3.2zM447.5 669.1h3.2v3.2h-3.2zM473.1 669.1h3.2v3.2h-3.2z" fill="#5a576b"/>
<path d="M396.3 582.7h3.2v3.2h-3.2zM396.3 585.9h3.2v3.2h-3.2zM473.1 585.9h3.2v3.2h-3.2zM389.9 589.1h3.2v3.2h-3.2zM313.1 592.3h3.2v3.2h-3.2zM319.5 592.3h3.2v3.2h-3.2zM348.3 592.3h3.2v3.2h-3.2zM351.5 592.3h3.2v3.2h-3.2zM412.3 592.3h3.2v3.2h-3.2zM463.5 592.3h3.2v3.2h-3.2zM309.9 595.5h3.2v3.2h-3.2zM345.1 595.5h3.2v3.2h-3.2zM351.5 595.5h3.2v3.2h-3.2zM399.5 595.5h3.2v3.2h-3.2zM409.1 595.5h3.2v3.2h-3.2zM463.5 595.5h3.2v3.2h-3.2zM319.5 598.7h3.2v3.2h-3.2zM434.7 601.9h3.2v3.2h-3.2zM469.9 601.9h3.2v3.2h-3.2zM434.7 605.1h3.2v3.2h-3.2zM412.3 608.3h3.2v3.2h-3.2zM425.1 608.3h3.2v3.2h-3.2zM431.5 608.3h3.2v3.2h-3.2zM303.5 611.5h3.2v3.2h-3.2zM409.1 611.5h3.2v3.2h-3.2zM306.7 614.7h3.2v3.2h-3.2zM393.1 614.7h3.2v3.2h-3.2zM396.3 614.7h3.2v3.2h-3.2zM405.9 614.7h3.2v3.2h-3.2zM409.1 614.7h3.2v3.2h-3.2zM393.1 617.9h3.2v3.2h-3.2zM447.5 617.9h3.2v3.2h-3.2zM469.9 617.9h3.2v3.2h-3.2zM479.5 617.9h3.2v3.2h-3.2zM316.3 621.1h3.2v3.2h-3.2zM412.3 621.1h3.2v3.2h-3.2zM313.1 624.3h3.2v3.2h-3.2zM322.7 624.3h3.2v3.2h-3.2zM325.9 624.3h3.2v3.2h-3.2zM415.5 624.3h3.2v3.2h-3.2zM479.5 624.3h3.2v3.2h-3.2zM309.9 627.5h3.2v3.2h-3.2zM415.5 627.5h3.2v3.2h-3.2zM418.7 627.5h3.2v3.2h-3.2zM476.3 627.5h3.2v3.2h-3.2zM479.5 627.5h3.2v3.2h-3.2zM405.9 630.7h3.2v3.2h-3.2zM412.3 630.7h3.2v3.2h-3.2zM418.7 630.7h3.2v3.2h-3.2zM351.5 633.9h3.2v3.2h-3.2zM386.7 633.9h3.2v3.2h-3.2zM389.9 633.9h3.2v3.2h-3.2zM335.5 637.1h3.2v3.2h-3.2zM357.9 637.1h3.2v3.2h-3.2zM361.1 637.1h3.2v3.2h-3.2zM460.3 637.1h3.2v3.2h-3.2zM479.5 637.1h3.2v3.2h-3.2zM482.7 637.1h3.2v3.2h-3.2zM434.7 643.5h3.2v3.2h-3.2zM367.5 646.7h3.2v3.2h-3.2zM380.3 646.7h3.2v3.2h-3.2zM428.3 646.7h3.2v3.2h-3.2zM434.7 646.7h3.2v3.2h-3.2zM447.5 646.7h3.2v3.2h-3.2zM386.7 649.9h3.2v3.2h-3.2zM389.9 649.9h3.2v3.2h-3.2zM325.9 653.1h3.2v3.2h-3.2zM367.5 653.1h3.2v3.2h-3.2zM380.3 653.1h3.2v3.2h-3.2zM386.7 653.1h3.2v3.2h-3.2zM450.7 653.1h3.2v3.2h-3.2zM457.1 653.1h3.2v3.2h-3.2zM319.5 656.3h3.2v3.2h-3.2zM386.7 656.3h3.2v3.2h-3.2zM389.9 656.3h3.2v3.2h-3.2zM405.9 656.3h3.2v3.2h-3.2zM418.7 656.3h3.2v3.2h-3.2zM479.5 656.3h3.2v3.2h-3.2zM373.9 659.5h3.2v3.2h-3.2zM409.1 659.5h3.2v3.2h-3.2zM373.9 665.9h3.2v3.2h-3.2zM450.7 665.9h3.2v3.2h-3.2zM453.9 665.9h3.2v3.2h-3.2zM460.3 665.9h3.2v3.2h-3.2zM463.5 665.9h3.2v3.2h-3.2zM460.3 669.1h3.2v3.2h-3.2z" fill="#6c697c"/>
<path d="M405.9 579.5h3.2v3.2h-3.2zM393.1 582.7h3.2v3.2h-3.2zM393.1 585.9h3.2v3.2h-3.2zM393.1 589.1h3.2v3.2h-3.2zM399.5 589.1h3.2v3.2h-3.2zM405.9 589.1h3.2v3.2h-3.2zM415.5 589.1h3.2v3.2h-3.2zM405.9 592.3h3.2v3.2h-3.2zM466.7 592.3h3.2v3.2h-3.2zM466.7 598.7h3.2v3.2h-3.2zM437.9 605.1h3.2v3.2h-3.2zM373.9 608.3h3.2v3.2h-3.2zM418.7 608.3h3.2v3.2h-3.2zM418.7 611.5h3.2v3.2h-3.2zM434.7 611.5h3.2v3.2h-3.2zM412.3 617.9h3.2v3.2h-3.2zM431.5 621.1h3.2v3.2h-3.2zM482.7 621.1h3.2v3.2h-3.2zM316.3 624.3h3.2v3.2h-3.2zM319.5 624.3h3.2v3.2h-3.2zM412.3 624.3h3.2v3.2h-3.2zM466.7 624.3h3.2v3.2h-3.2zM476.3 624.3h3.2v3.2h-3.2zM421.9 627.5h3.2v3.2h-3.2zM431.5 627.5h3.2v3.2h-3.2zM469.9 627.5h3.2v3.2h-3.2zM402.7 630.7h3.2v3.2h-3.2zM409.1 630.7h3.2v3.2h-3.2zM345.1 633.9h3.2v3.2h-3.2zM354.7 633.9h3.2v3.2h-3.2zM393.1 633.9h3.2v3.2h-3.2zM396.3 633.9h3.2v3.2h-3.2zM479.5 640.3h3.2v3.2h-3.2zM386.7 646.7h3.2v3.2h-3.2zM367.5 649.9h3.2v3.2h-3.2zM373.9 649.9h3.2v3.2h-3.2zM380.3 649.9h3.2v3.2h-3.2zM466.7 653.1h3.2v3.2h-3.2zM380.3 656.3h3.2v3.2h-3.2zM383.5 656.3h3.2v3.2h-3.2z" fill="#7f7a8d"/>
<path d="M402.7 579.5h3.2v3.2h-3.2zM402.7 582.7h3.2v3.2h-3.2zM479.5 589.1h3.2v3.2h-3.2zM402.7 592.3h3.2v3.2h-3.2zM319.5 595.5h3.2v3.2h-3.2zM469.9 595.5h3.2v3.2h-3.2zM473.1 595.5h3.2v3.2h-3.2zM479.5 595.5h3.2v3.2h-3.2zM485.9 595.5h3.2v3.2h-3.2zM476.3 598.7h3.2v3.2h-3.2zM479.5 598.7h3.2v3.2h-3.2zM418.7 605.1h3.2v3.2h-3.2zM421.9 605.1h3.2v3.2h-3.2zM431.5 605.1h3.2v3.2h-3.2zM444.3 608.3h3.2v3.2h-3.2zM306.7 611.5h3.2v3.2h-3.2zM425.1 611.5h3.2v3.2h-3.2zM415.5 614.7h3.2v3.2h-3.2zM421.9 614.7h3.2v3.2h-3.2zM425.1 614.7h3.2v3.2h-3.2zM421.9 617.9h3.2v3.2h-3.2zM402.7 621.1h3.2v3.2h-3.2zM415.5 621.1h3.2v3.2h-3.2zM418.7 621.1h3.2v3.2h-3.2zM479.5 621.1h3.2v3.2h-3.2zM425.1 624.3h3.2v3.2h-3.2zM431.5 624.3h3.2v3.2h-3.2zM469.9 624.3h3.2v3.2h-3.2zM425.1 627.5h3.2v3.2h-3.2zM389.9 630.7h3.2v3.2h-3.2zM399.5 630.7h3.2v3.2h-3.2zM338.7 637.1h3.2v3.2h-3.2zM396.3 637.1h3.2v3.2h-3.2zM473.1 640.3h3.2v3.2h-3.2zM383.5 646.7h3.2v3.2h-3.2zM444.3 646.7h3.2v3.2h-3.2zM377.1 649.9h3.2v3.2h-3.2zM383.5 649.9h3.2v3.2h-3.2zM383.5 653.1h3.2v3.2h-3.2zM463.5 653.1h3.2v3.2h-3.2zM377.1 656.3h3.2v3.2h-3.2z" fill="#918c9e"/>
<path d="M412.3 582.7h3.2v3.2h-3.2zM402.7 589.1h3.2v3.2h-3.2zM479.5 592.3h3.2v3.2h-3.2zM476.3 595.5h3.2v3.2h-3.2zM469.9 598.7h3.2v3.2h-3.2zM482.7 598.7h3.2v3.2h-3.2zM428.3 611.5h3.2v3.2h-3.2zM425.1 621.1h3.2v3.2h-3.2zM463.5 621.1h3.2v3.2h-3.2zM469.9 621.1h3.2v3.2h-3.2zM396.3 630.7h3.2v3.2h-3.2zM341.9 633.9h3.2v3.2h-3.2zM405.9 633.9h3.2v3.2h-3.2zM476.3 637.1h3.2v3.2h-3.2z" fill="#a39eb0"/>
<path d="M405.9 585.9h3.2v3.2h-3.2zM473.1 592.3h3.2v3.2h-3.2zM489.1 592.3h3.2v3.2h-3.2zM316.3 595.5h3.2v3.2h-3.2zM437.9 608.3h3.2v3.2h-3.2zM441.1 611.5h3.2v3.2h-3.2zM428.3 614.7h3.2v3.2h-3.2zM431.5 614.7h3.2v3.2h-3.2zM434.7 614.7h3.2v3.2h-3.2zM437.9 617.9h3.2v3.2h-3.2zM421.9 621.1h3.2v3.2h-3.2zM393.1 630.7h3.2v3.2h-3.2zM348.3 637.1h3.2v3.2h-3.2z" fill="#b5b0c1"/>
<path d="M428.3 608.3h3.2v3.2h-3.2zM434.7 608.3h3.2v3.2h-3.2zM441.1 608.3h3.2v3.2h-3.2zM441.1 614.7h3.2v3.2h-3.2zM428.3 617.9h3.2v3.2h-3.2zM345.1 637.1h3.2v3.2h-3.2z" fill="#c7c2d2"/>
<path d="M399.5 582.7h3.2v3.2h-3.2zM405.9 582.7h3.2v3.2h-3.2zM399.5 585.9h3.2v3.2h-3.2zM402.7 585.9h3.2v3.2h-3.2zM476.3 592.3h3.2v3.2h-3.2zM485.9 592.3h3.2v3.2h-3.2zM482.7 595.5h3.2v3.2h-3.2zM489.1 595.5h3.2v3.2h-3.2zM485.9 598.7h3.2v3.2h-3.2zM431.5 611.5h3.2v3.2h-3.2zM437.9 611.5h3.2v3.2h-3.2zM437.9 614.7h3.2v3.2h-3.2zM341.9 637.1h3.2v3.2h-3.2z" fill="#dad4e4"/>
<rect x="303.5" y="706.8" width="191.5" height="5" fill="#000"/><rect x="495.0" y="576.3" width="6" height="135.5" fill="#000"/>
</svg>
<div class="p" style="left:0;top:0;width:495px;height:334px"></div>
<div class="p" style="left:0;top:338px;width:398px;height:233px"></div>
<div class="p" style="left:401px;top:338px;width:94px;height:233px"></div>
<div class="p" style="left:0;top:576px;width:299px;height:226px"></div>
<div class="p" style="left:498px;top:0;width:698px;height:803px"></div>
<div class="t" style="left:6.40px;top:1.00px;font:bold 11.6px/14px 'DejaVu Sans','Liberation Sans',sans-serif;color:#ffff00;letter-spacing:-0.354px;">Current Conditions, WD 10.37S104</div>
<div class="c" style="left:4.40px;top:20.10px;width:65.70px;height:16.70px"><div class="t b" style="left:0;top:-2.10px;font:bold 19.7px/22px 'Liberation Sans',Arial,sans-serif;color:#fff;letter-spacing:-0.209px;">Average</div></div>
<div class="c" style="left:4.40px;top:37.00px;width:98.80px;height:16.00px"><div class="t b" style="left:0;top:-3.00px;font:bold 19.7px/22px 'Liberation Sans',Arial,sans-serif;color:#fff;letter-spacing:-0.402px;">Wind Speed</div></div>
<div class="c" style="left:3.80px;top:54.60px;width:60.30px;height:16.00px"><div class="t b" style="left:0;top:-2.60px;font:bold 19.7px/22px 'Liberation Sans',Arial,sans-serif;color:#fff;letter-spacing:-0.6px;">Current</div></div>
<div class="c" style="left:3.20px;top:70.00px;width:99.00px;height:16.40px"><div class="t b" style="left:0;top:-3.00px;font:bold 19.7px/22px 'Liberation Sans',Arial,sans-serif;color:#fff;letter-spacing:-0.377px;">Wind Speed</div></div>
<div class="c" style="left:5.40px;top:90.10px;width:100.60px;height:17.30px"><div class="t b" style="left:0;top:-2.10px;font:bold 19.7px/22px 'Liberation Sans',Arial,sans-serif;color:#fff;letter-spacing:-0.442px;">Temperature</div></div>
<div class="c" style="left:5.40px;top:119.10px;width:87.00px;height:17.30px"><div class="t b" style="left:0;top:-2.10px;font:bold 19.7px/22px 'Liberation Sans',Arial,sans-serif;color:#fff;letter-spacing:-0.358px;">Temp Rate</div></div>
<div class="c" style="left:5.70px;top:149.10px;width:84.10px;height:17.30px"><div class="t b" style="left:0;top:-2.10px;font:bold 19.7px/22px 'Liberation Sans',Arial,sans-serif;color:#fff;letter-spacing:-0.6px;">Barometer</div></div>
<div class="c" style="left:5.40px;top:174.10px;width:69.60px;height:17.30px"><div class="t b" style="left:0;top:-2.10px;font:bold 19.7px/22px 'Liberation Sans',Arial,sans-serif;color:#fff;letter-spacing:-0.597px;">Pressure</div></div>
<div class="c" style="left:5.40px;top:193.10px;width:54.60px;height:16.30px"><div class="t b" style="left:0;top:-3.10px;font:bold 19.7px/22px 'Liberation Sans',Arial,sans-serif;color:#fff;letter-spacing:-0.6px;">Rate</div></div>
<div class="c" style="left:5.40px;top:218.10px;width:70.20px;height:17.30px"><div class="t b" style="left:0;top:-2.10px;font:bold 19.7px/22px 'Liberation Sans',Arial,sans-serif;color:#fff;letter-spacing:-0.6px;">Humidity</div></div>
<div class="c" style="left:5.40px;top:247.10px;width:106.10px;height:17.30px"><div class="t b" style="left:0;top:-2.10px;font:bold 19.7px/22px 'Liberation Sans',Arial,sans-serif;color:#fff;letter-spacing:-0.283px;">Dew Pt Depression</div></div>
<div class="c" style="left:6.40px;top:279.10px;width:106.70px;height:17.30px"><div class="t b" style="left:0;top:-2.10px;font:bold 19.7px/22px 'Liberation Sans',Arial,sans-serif;color:#fff;letter-spacing:0.023px;">Indoor Temp</div></div>
<div class="c" style="left:6.40px;top:307.10px;width:99.60px;height:17.30px"><div class="t b" style="left:0;top:-2.10px;font:bold 19.7px/22px 'Liberation Sans',Arial,sans-serif;color:#fff;letter-spacing:-0.067px;">Indoor Hum</div></div>
<div class="c" style="left:237.00px;top:246.10px;width:76.40px;height:17.30px"><div class="t b" style="left:0;top:-2.10px;font:bold 19.7px/22px 'Liberation Sans',Arial,sans-serif;color:#fff;letter-spacing:-0.173px;">Wind chill</div></div>
<div class="c" style="left:237.00px;top:276.10px;width:82.40px;height:17.30px"><div class="t b" style="left:0;top:-2.10px;font:bold 19.7px/22px 'Liberation Sans',Arial,sans-serif;color:#fff;letter-spacing:-0.205px;">Dew Point</div></div>
<div class="c" style="left:239.40px;top:306.10px;width:73.60px;height:17.30px"><div class="t b" style="left:0;top:-2.10px;font:bold 19.7px/22px 'Liberation Sans',Arial,sans-serif;color:#fff;letter-spacing:-0.498px;">Wet Bulb</div></div>
<div class="t b" style="left:121.40px;top:21.00px;font:bold 21px/23px 'Liberation Sans',Arial,sans-serif;color:#00ff00;letter-spacing:-0.226px;">29.5 kmh</div>
<div class="t b" style="left:121.40px;top:51.00px;font:bold 21px/23px 'Liberation Sans',Arial,sans-serif;color:#00ff00;letter-spacing:-0.226px;">54.0 kmh</div>
<div class="t b" style="left:123.40px;top:84.00px;font:bold 21px/23px 'Liberation Sans',Arial,sans-serif;color:#ff0000;letter-spacing:0.042px;">7.6 °C</div>
<div class="c" style="left:113.10px;top:112.00px;width:102.20px;height:28.00px"><div class="t b" style="left:0;top:3.00px;font:bold 21px/23px 'Liberation Sans',Arial,sans-serif;color:#00ff00;letter-spacing:0.251px;">+9.7 °C /hr</div></div>
<div class="t b" style="left:114.40px;top:147.00px;font:bold 21px/23px 'Liberation Sans',Arial,sans-serif;color:#00ff00;letter-spacing:-0.214px;">1010.1 hPa</div>
<div class="t b" style="left:110.40px;top:179.00px;font:bold 21px/23px 'Liberation Sans',Arial,sans-serif;color:#00ff00;letter-spacing:-0.6px;">+5.1hPa/hr</div>
<div class="t b" style="left:119.40px;top:210.00px;font:bold 21px/23px 'Liberation Sans',Arial,sans-serif;color:#00ff00;letter-spacing:0.307px;">68 %</div>
<div class="t b" style="left:119.40px;top:243.00px;font:bold 21px/23px 'Liberation Sans',Arial,sans-serif;color:#00ff00;letter-spacing:0.242px;">5.5 °C</div>
<div class="t b" style="left:121.40px;top:273.00px;font:bold 21px/23px 'Liberation Sans',Arial,sans-serif;color:#00ff00;letter-spacing:0.035px;">11.7 °C</div>
<div class="t b" style="left:119.40px;top:303.00px;font:bold 21px/23px 'Liberation Sans',Arial,sans-serif;color:#00ff00;letter-spacing:0.307px;">60 %</div>
<div class="t b" style="left:368.40px;top:241.00px;font:bold 21px/23px 'Liberation Sans',Arial,sans-serif;color:#00ff00;letter-spacing:0.342px;">3.5 °C</div>
<div class="t b" style="left:368.40px;top:273.00px;font:bold 21px/23px 'Liberation Sans',Arial,sans-serif;color:#00ff00;letter-spacing:0.342px;">2.1 °C</div>
<div class="t b" style="left:368.40px;top:303.00px;font:bold 21px/23px 'Liberation Sans',Arial,sans-serif;color:#00ff00;letter-spacing:0.342px;">5.3 °C</div>
<div class="t b" style="left:422.50px;top:56.00px;font:bold 18.5px/21px 'Liberation Sans',Arial,sans-serif;color:#00ff00;">N</div>
<div class="t b" style="left:366.50px;top:74.00px;font:bold 18.5px/21px 'Liberation Sans',Arial,sans-serif;color:#00ff00;">NW</div>
<div class="t b" style="left:462.50px;top:74.00px;font:bold 18.5px/21px 'Liberation Sans',Arial,sans-serif;color:#00ff00;">NE</div>
<div class="t b" style="left:360.50px;top:122.00px;font:bold 18.5px/21px 'Liberation Sans',Arial,sans-serif;color:#00ff00;">W</div>
<div class="t b" style="left:483.50px;top:122.00px;font:bold 18.5px/21px 'Liberation Sans',Arial,sans-serif;color:#00ff00;">E</div>
<div class="t b" style="left:365.50px;top:173.00px;font:bold 18.5px/21px 'Liberation Sans',Arial,sans-serif;color:#00ff00;">SW</div>
<div class="t b" style="left:459.50px;top:173.00px;font:bold 18.5px/21px 'Liberation Sans',Arial,sans-serif;color:#00ff00;">SE</div>
<div class="t b" style="left:423.50px;top:187.00px;font:bold 18.5px/21px 'Liberation Sans',Arial,sans-serif;color:#00ff00;">S</div>
<div class="t b" style="left:377.50px;top:208.00px;font:bold 19.5px/22px 'Liberation Sans',Arial,sans-serif;color:#00ff00;">S</div>
<div class="t b" style="left:406.00px;top:208.00px;font:bold 19.5px/22px 'Liberation Sans',Arial,sans-serif;color:#00ff00;">180</div>
<div class="t b" style="left:444.50px;top:208.00px;font:bold 19.5px/22px 'Liberation Sans',Arial,sans-serif;color:#00ff00;">°</div>
<div class="bx" style="left:465px;top:230px;width:24px;height:104px"></div>
<div style="position:absolute;left:467px;top:318px;width:21px;height:3px;background:#ff0"></div>
<div style="position:absolute;left:467px;top:322px;width:21px;height:3px;background:#ff0"></div>
<div style="position:absolute;left:467px;top:326px;width:21px;height:3px;background:#ff0"></div>
<div style="position:absolute;left:467px;top:330px;width:21px;height:3px;background:#ff0"></div>
<div class="t" style="left:470.60px;top:279.00px;font:10px/11px 'Liberation Sans',Arial,sans-serif;color:#fff;">4,1</div>
<div class="t" style="left:6.40px;top:339.00px;font:bold 11.6px/14px 'DejaVu Sans','Liberation Sans',sans-serif;color:#ffff00;letter-spacing:-0.542px;">Extreme Conditions</div>
<div class="t" style="left:180.40px;top:342.00px;font:18.3px/21px 'Liberation Sans',Arial,sans-serif;color:#fff;letter-spacing:0.064px;">Values reset at 0</div>
<div class="c" style="left:3.15px;top:365.10px;width:171.85px;height:17.30px"><div class="t b" style="left:0;top:-2.10px;font:bold 19.7px/22px 'Liberation Sans',Arial,sans-serif;color:#fff;letter-spacing:-0.323px;">Maximum Gust Today</div></div>
<div class="c" style="left:3.15px;top:401.10px;width:201.05px;height:17.30px"><div class="t b" style="left:0;top:-2.10px;font:bold 19.7px/22px 'Liberation Sans',Arial,sans-serif;color:#fff;letter-spacing:-0.369px;">Maximum Gust Last Hour</div></div>
<div class="c" style="left:3.15px;top:437.10px;width:149.95px;height:17.30px"><div class="t b" style="left:0;top:-2.10px;font:bold 19.7px/22px 'Liberation Sans',Arial,sans-serif;color:#fff;letter-spacing:-0.043px;">Maximum Average</div></div>
<div class="c" style="left:3.15px;top:473.10px;width:181.25px;height:17.30px"><div class="t b" style="left:0;top:-2.10px;font:bold 19.7px/22px 'Liberation Sans',Arial,sans-serif;color:#fff;letter-spacing:-0.168px;">Maximum Temperature</div></div>
<div class="c" style="left:3.15px;top:509.10px;width:177.85px;height:17.30px"><div class="t b" style="left:0;top:-2.10px;font:bold 19.7px/22px 'Liberation Sans',Arial,sans-serif;color:#fff;letter-spacing:-0.069px;">Minimum Temperature</div></div>
<div class="c" style="left:17.10px;top:534.10px;width:74.90px;height:17.30px"><div class="t b" style="left:0;top:-2.10px;font:bold 19.7px/22px 'Liberation Sans',Arial,sans-serif;color:#fff;letter-spacing:-0.6px;">Maximum</div></div>
<div class="c" style="left:15.40px;top:553.10px;width:81.10px;height:16.30px"><div class="t b" style="left:0;top:-3.10px;font:bold 19.7px/22px 'Liberation Sans',Arial,sans-serif;color:#fff;letter-spacing:-0.6px;">Rain Rate</div></div>
<div class="led" style="left:239.9px;top:366.8px"></div>
<div class="led" style="left:239.9px;top:402.8px"></div>
<div class="led" style="left:239.9px;top:439.5px"></div>
<div class="led" style="left:239.9px;top:476.5px"></div>
<div class="led" style="left:239.9px;top:511.5px"></div>
<div class="led" style="left:119.1px;top:546.5px"></div>
<div class="led" style="left:472.9px;top:772.8px"></div>
<div class="t b" style="left:260.20px;top:361.00px;font:bold 21px/23px 'Liberation Sans',Arial,sans-serif;color:#ff0000;letter-spacing:-0.6px;">90.7 kmh NNE</div>
<div class="t b" style="left:260.20px;top:397.00px;font:bold 21px/23px 'Liberation Sans',Arial,sans-serif;color:#00ff00;letter-spacing:-0.6px;">90.7 kmh NNE</div>
<div class="t b" style="left:260.20px;top:433.00px;font:bold 21px/23px 'Liberation Sans',Arial,sans-serif;color:#00ff00;letter-spacing:-0.6px;">48.1 kmh SW</div>
<div class="t b" style="left:263.10px;top:470.00px;font:bold 21px/23px 'Liberation Sans',Arial,sans-serif;color:#ff0000;letter-spacing:-0.133px;">10.8 °C</div>
<div class="t b" style="left:260.20px;top:505.00px;font:bold 21px/23px 'Liberation Sans',Arial,sans-serif;color:#00ff00;letter-spacing:0.405px;">-2.3 °C</div>
<div class="t b" style="left:136.90px;top:539.00px;font:bold 21px/23px 'Liberation Sans',Arial,sans-serif;color:#00ff00;letter-spacing:-0.332px;">0.0 mm/min (0.0 mm/hr)</div>
<div class="t" style="left:408.40px;top:339.00px;font:bold 11.6px/14px 'DejaVu Sans','Liberation Sans',sans-serif;color:#ffff00;letter-spacing:-0.6px;">At Time</div>
<div class="t b" style="left:409.40px;top:362.00px;font:bold 19.6px/22px 'Liberation Sans',Arial,sans-serif;color:#ff0000;letter-spacing:-0.432px;">18:02</div>
<div class="t b" style="left:409.40px;top:398.00px;font:bold 19.6px/22px 'Liberation Sans',Arial,sans-serif;color:#00ff00;letter-spacing:-0.432px;">18:02</div>
<div class="t b" style="left:409.40px;top:434.00px;font:bold 19.6px/22px 'Liberation Sans',Arial,sans-serif;color:#00ff00;letter-spacing:-0.432px;">19:23</div>
<div class="t b" style="left:408.40px;top:470.00px;font:bold 19.6px/22px 'Liberation Sans',Arial,sans-serif;color:#ff0000;letter-spacing:-0.432px;">22:23</div>
<div class="t b" style="left:409.40px;top:505.00px;font:bold 19.6px/22px 'Liberation Sans',Arial,sans-serif;color:#00ff00;letter-spacing:-0.432px;">14:05</div>
<div class="t b" style="left:408.40px;top:540.00px;font:bold 19.6px/22px 'Liberation Sans',Arial,sans-serif;color:#00ff00;letter-spacing:-0.432px;">00:00</div>
<div class="t" style="left:5.90px;top:577.00px;font:11.5px/14px 'DejaVu Sans','Liberation Sans',sans-serif;color:#ffff00;letter-spacing:0.393px;">Rainfall</div>
<div class="t" style="left:83.90px;top:581.00px;font:18.2px/20px 'Liberation Sans',Arial,sans-serif;color:#fff;letter-spacing:-0.018px;">Rain reset at 0</div>
<div class="c" style="left:5.30px;top:605.10px;width:80.00px;height:17.30px"><div class="t b" style="left:0;top:-2.10px;font:bold 19.7px/22px 'Liberation Sans',Arial,sans-serif;color:#fff;letter-spacing:-0.6px;">Last Hour</div></div>
<div class="c" style="left:5.30px;top:638.10px;width:47.00px;height:17.30px"><div class="t b" style="left:0;top:-2.10px;font:bold 19.7px/22px 'Liberation Sans',Arial,sans-serif;color:#fff;letter-spacing:-0.6px;">Today</div></div>
<div class="c" style="left:5.30px;top:671.10px;width:80.90px;height:17.30px"><div class="t b" style="left:0;top:-2.10px;font:bold 19.7px/22px 'Liberation Sans',Arial,sans-serif;color:#fff;letter-spacing:-0.221px;">Yesterday</div></div>
<div class="c" style="left:5.30px;top:704.10px;width:119.00px;height:17.30px"><div class="t b" style="left:0;top:-2.10px;font:bold 19.7px/22px 'Liberation Sans',Arial,sans-serif;color:#fff;letter-spacing:0.095px;">Month To Date</div></div>
<div class="c" style="left:5.30px;top:737.10px;width:107.30px;height:17.30px"><div class="t b" style="left:0;top:-2.10px;font:bold 19.7px/22px 'Liberation Sans',Arial,sans-serif;color:#fff;letter-spacing:0.131px;">Year To Date</div></div>
<div class="c" style="left:5.90px;top:758.60px;width:82.40px;height:13.60px"><div class="t b" style="left:0;top:-3.60px;font:bold 19.7px/22px 'Liberation Sans',Arial,sans-serif;color:#fff;letter-spacing:-0.348px;">Rain Rate</div></div>
<div class="t b" style="left:174.40px;top:599.00px;font:bold 21px/23px 'Liberation Sans',Arial,sans-serif;color:#00ff00;letter-spacing:-0.6px;">0.0 mm</div>
<div class="t b" style="left:174.40px;top:632.00px;font:bold 21px/23px 'Liberation Sans',Arial,sans-serif;color:#00ff00;letter-spacing:-0.6px;">0.0 mm</div>
<div class="t b" style="left:176.40px;top:665.00px;font:bold 21px/23px 'Liberation Sans',Arial,sans-serif;color:#00ff00;letter-spacing:-0.6px;">19.2 mm</div>
<div class="t b" style="left:176.40px;top:698.00px;font:bold 21px/23px 'Liberation Sans',Arial,sans-serif;color:#00ff00;letter-spacing:-0.6px;">160.8 mm</div>
<div class="t b" style="left:176.40px;top:734.00px;font:bold 21px/23px 'Liberation Sans',Arial,sans-serif;color:#00ff00;letter-spacing:-0.6px;">160.8 mm</div>
<div class="t b" style="left:8.20px;top:774.00px;font:bold 21px/23px 'Liberation Sans',Arial,sans-serif;color:#00ff00;letter-spacing:-0.258px;">0.00 mm/min (0.00 mm/hr)</div>
<div class="bx" style="left:273px;top:584px;width:23px;height:145px"></div>
<div class="t" style="left:278.30px;top:653.00px;font:10px/11px 'Liberation Sans',Arial,sans-serif;color:#fff;">0,0</div>
<div class="t" style="left:338.40px;top:709.00px;font:bold 24px/28px 'DejaVu Sans','Liberation Sans',sans-serif;color:#00ff00;letter-spacing:-0.35px;">2/12/2023</div>
<div class="t" style="left:331.20px;top:737.00px;font:15.4px/17px 'Liberation Sans',Arial,sans-serif;color:#00ff00;letter-spacing:-0.013px;">18:15:11</div>
<div class="t" style="left:323.40px;top:766.00px;font:13.5px/15px 'Liberation Serif','Times New Roman',serif;color:#fff;letter-spacing:-0.006px;">Data Received</div>
<div class="t" style="left:419.80px;top:765.00px;font:11px/12px 'Liberation Serif','Times New Roman',serif;color:#fff;">62</div>
<div class="t" style="left:420.00px;top:786.00px;font:11px/12px 'Liberation Serif','Times New Roman',serif;color:#ff0000;">0</div>
<div class="t" style="left:459.40px;top:791.00px;font:12px/14px 'Liberation Serif','Times New Roman',serif;color:#fff;letter-spacing:-0.6px;">Alarm</div>
<svg width="500" height="340" viewBox="0 0 500 340" style="left:0;top:0">
<defs>
<linearGradient id="bz" x1="0" y1="0" x2="1" y2="1"><stop offset="0" stop-color="#ffffff"/><stop offset="0.5" stop-color="#c4c4c4"/><stop offset="1" stop-color="#7c7c7c"/></linearGradient>
<linearGradient id="bz2" x1="0" y1="0" x2="1" y2="1"><stop offset="0" stop-color="#8c8c8c"/><stop offset="0.5" stop-color="#d0d0d0"/><stop offset="1" stop-color="#ffffff"/></linearGradient>
<radialGradient id="hub" cx="0.4" cy="0.35" r="0.7"><stop offset="0" stop-color="#c4ccd6"/><stop offset="0.6" stop-color="#8a929c"/><stop offset="1" stop-color="#5c6068"/></radialGradient>
<radialGradient id="face" cx="0.5" cy="0.5" r="0.5"><stop offset="0" stop-color="#e9e9e9"/><stop offset="0.85" stop-color="#e2e2e2"/><stop offset="1" stop-color="#d2d2d2"/></radialGradient>
</defs>
<circle cx="286.2" cy="130.8" r="69.5" fill="url(#bz)"/>
<circle cx="286.2" cy="130.8" r="65.0" fill="url(#bz2)"/>
<circle cx="286.2" cy="130.8" r="62.0" fill="url(#face)"/>
<path d="M243.77 173.23A60 60 0 0 1 243.77 88.37" fill="none" stroke="#10f010" stroke-width="2"/>
<path d="M243.77 88.37A60 60 0 0 1 328.63 88.37" fill="none" stroke="#f4f400" stroke-width="2"/>
<path d="M328.63 88.37A60 60 0 0 1 328.63 173.23" fill="none" stroke="#ff1010" stroke-width="2"/>
<path d="M250.1 166.9L245.2 171.8M244.2 165.5L241.5 167.8M241.1 161.4L238.2 163.4M238.4 157.1L235.4 158.7M236.2 152.4L233.0 153.8M237.7 146.6L231.0 148.7M233.0 142.7L229.6 143.5M232.1 137.6L228.7 138.1M231.7 132.5L228.2 132.6M231.8 127.4L228.3 127.2M235.8 122.8L228.9 121.7M233.4 117.2L230.0 116.4M234.9 112.3L231.6 111.2M236.9 107.6L233.7 106.1M239.3 103.1L236.3 101.3M244.9 100.8L239.3 96.7M245.3 94.8L242.7 92.4M248.9 91.1L246.5 88.5M252.8 87.7L250.7 85.0M257.0 84.8L255.1 81.8M263.0 85.4L259.9 79.1M266.1 80.1L264.8 76.9M271.0 78.5L270.0 75.1M276.0 77.3L275.3 73.8M281.1 76.5L280.7 73.1M286.2 79.8L286.2 72.8M291.3 76.5L291.7 73.1M296.4 77.3L297.1 73.8M301.4 78.5L302.4 75.1M306.3 80.1L307.6 76.9M309.4 85.4L312.5 79.1M315.4 84.8L317.3 81.8M319.6 87.7L321.7 85.0M323.5 91.1L325.9 88.5M327.1 94.8L329.7 92.4M327.5 100.8L333.1 96.7M333.1 103.1L336.1 101.3M335.5 107.6L338.7 106.1M337.5 112.3L340.8 111.2M339.0 117.2L342.4 116.4M336.6 122.8L343.5 121.7M340.6 127.4L344.1 127.2M340.7 132.5L344.2 132.6M340.3 137.6L343.7 138.1M339.4 142.7L342.8 143.5M334.7 146.6L341.4 148.7M336.2 152.4L339.4 153.8M334.0 157.1L337.0 158.7M331.3 161.4L334.2 163.4M328.2 165.5L330.9 167.8M322.3 166.9L327.2 171.8" stroke="#1c1cff" stroke-width="1.3" fill="none" opacity="0.85"/>
<g font-family="'Liberation Sans',Arial,sans-serif" font-size="13.5" fill="#1c1cff" text-anchor="middle" opacity="0.85">
<text x="254.2" y="162.0">0</text>
<text x="242.5" y="149.2">7</text>
<text x="240.8" y="127.8">14</text>
<text x="249.0" y="108.0">22</text>
<text x="265.3" y="94.0">29</text>
<text x="286.2" y="89.0">36</text>
<text x="307.1" y="94.0">43</text>
<text x="323.4" y="108.0">51</text>
<text x="331.6" y="127.8">58</text>
<text x="329.9" y="149.2">65</text>
<text x="316.0" y="161.6">72</text>
</g>
<line x1="286.2" y1="130.8" x2="309.4" y2="119.0" stroke="#20e020" stroke-width="1.6"/>
<polygon points="287.0,132.6 331.5,112.0 285.4,129.0" fill="#ff2020"/>
<polygon points="286.8,132.2 262.5,144.1 260.0,138.2 285.6,129.4" fill="#ff5a5a" opacity="0.8"/>
<circle cx="286.2" cy="130.8" r="14" fill="#6e6e6e"/>
<circle cx="286.2" cy="130.8" r="10.5" fill="url(#hub)"/>
<text x="245.6" y="185.3" font-family="'Liberation Sans',Arial,sans-serif" font-size="38" fill="#0a0aff" textLength="79.5" lengthAdjust="spacingAndGlyphs">54.0</text>
<circle cx="429.6" cy="129.5" r="52" fill="url(#bz)"/>
<circle cx="429.6" cy="129.5" r="49.5" fill="url(#bz2)"/>
<circle cx="429.6" cy="129.5" r="47.5" fill="url(#face)"/>
<path d="M429.6 89.5L429.6 84.0M436.4 86.5L436.7 84.6M443.0 88.1L443.7 86.2M449.3 90.7L450.3 89.0M455.2 94.3L456.3 92.7M457.9 101.2L461.8 97.3M464.8 103.9L466.4 102.8M468.4 109.8L470.1 108.8M471.0 116.1L472.9 115.4M472.6 122.7L474.5 122.4M469.6 129.5L475.1 129.5M472.6 136.3L474.5 136.6M471.0 142.9L472.9 143.6M468.4 149.2L470.1 150.2M464.8 155.1L466.4 156.2M457.9 157.8L461.8 161.7M455.2 164.7L456.3 166.3M449.3 168.3L450.3 170.0M443.0 170.9L443.7 172.8M436.4 172.5L436.7 174.4M429.6 169.5L429.6 175.0M422.8 172.5L422.5 174.4M416.2 170.9L415.5 172.8M409.9 168.3L408.9 170.0M404.0 164.7L402.9 166.3M401.3 157.8L397.4 161.7M394.4 155.1L392.8 156.2M390.8 149.2L389.1 150.2M388.2 142.9L386.3 143.6M386.6 136.3L384.7 136.6M389.6 129.5L384.1 129.5M386.6 122.7L384.7 122.4M388.2 116.1L386.3 115.4M390.8 109.8L389.1 108.8M394.4 103.9L392.8 102.8M401.3 101.2L397.4 97.3M404.0 94.3L402.9 92.7M409.9 90.7L408.9 89.0M416.2 88.1L415.5 86.2M422.8 86.5L422.5 84.6" stroke="#1c1cff" stroke-width="1.2" fill="none" opacity="0.8"/>
<g font-family="'Liberation Sans',Arial,sans-serif" font-size="15" fill="#1c1cff" text-anchor="middle" opacity="0.8">
<text x="429.6" y="97.9">360</text>
<text x="454.3" y="108.2">45</text>
<text x="464.6" y="132.9">90</text>
<text x="454.3" y="157.6">135</text>
<text x="429.6" y="167.9">180</text>
<text x="404.9" y="157.6">225</text>
<text x="394.6" y="132.9">270</text>
<text x="404.9" y="108.2">315</text>
</g>
<rect x="387" y="126.7" width="36" height="5.6" fill="#6ce46c" opacity="0.8"/>
<rect x="425.6" y="110" width="8" height="12" fill="#ff6a6a" opacity="0.85"/>
<rect x="427.3" y="129.5" width="4.8" height="37" fill="#ff1818"/>
<circle cx="429.6" cy="129.5" r="10" fill="#6a6a6a"/>
<circle cx="429.6" cy="129.5" r="7.5" fill="url(#hub)"/>
</svg>
<svg width="1200" height="807" viewBox="0 0 1200 807" style="left:0;top:0">
<defs>
<linearGradient id="pg" x1="0" y1="0" x2="0" y2="1"><stop offset="0" stop-color="#c8c8c8"/><stop offset="0.25" stop-color="#989898"/><stop offset="0.5" stop-color="#626262"/><stop offset="0.75" stop-color="#303030"/><stop offset="0.9" stop-color="#181818"/><stop offset="1" stop-color="#050505"/></linearGradient>
<clipPath id="c1"><rect x="567" y="20" width="560" height="322"/></clipPath>
<clipPath id="c1l"><rect x="500" y="20" width="700" height="340"/></clipPath>
<clipPath id="c2"><rect x="558" y="359" width="569" height="105"/></clipPath>
<clipPath id="c3"><rect x="569" y="494" width="558" height="293"/></clipPath>
<clipPath id="c3l"><rect x="500" y="494" width="700" height="313"/></clipPath>
<clipPath id="c4"><rect x="500" y="465.5" width="700" height="20"/></clipPath>
</defs>
<rect x="567.5" y="20" width="559.0" height="321" fill="url(#pg)"/>
<path d="M599.3 20V341M645.0 20V341M693.8 20V341M741.4 20V341M787.5 20V341M833.5 20V341M879.5 20V341M925.8 20V341M941.4 20V341M983.0 20V341M1028.2 20V341M1074.2 20V341M1104.6 20V341M567.5 339.5H1126.5M567.5 307.8H1126.5M567.5 276.1H1126.5M567.5 244.4H1126.5M567.5 212.7H1126.5M567.5 181.0H1126.5M567.5 149.3H1126.5M567.5 117.6H1126.5M567.5 85.9H1126.5M567.5 54.2H1126.5M567.5 22.5H1126.5" stroke="#e8e8e8" stroke-width="1" stroke-dasharray="1 1.5" fill="none" opacity="0.36"/>
<path d="M568.2 20V342.5H1126.5" stroke="#e6e6e6" stroke-width="2" fill="none"/>
<path d="M1126.5 20V342.5" stroke="#e0d8e0" stroke-width="1.4" fill="none"/>
<path d="M563.0 340.4H567.5M565.0 332.5H567.5M565.0 324.5H567.5M565.0 316.6H567.5M563.0 308.7H567.5M565.0 300.8H567.5M565.0 292.8H567.5M565.0 284.9H567.5M563.0 277.0H567.5M565.0 269.1H567.5M565.0 261.1H567.5M565.0 253.2H567.5M563.0 245.3H567.5M565.0 237.4H567.5M565.0 229.4H567.5M565.0 221.5H567.5M563.0 213.6H567.5M565.0 205.7H567.5M565.0 197.7H567.5M565.0 189.8H567.5M563.0 181.9H567.5M565.0 174.0H567.5M565.0 166.0H567.5M565.0 158.1H567.5M563.0 150.2H567.5M565.0 142.3H567.5M565.0 134.3H567.5M565.0 126.4H567.5M563.0 118.5H567.5M565.0 110.6H567.5M565.0 102.6H567.5M565.0 94.7H567.5M563.0 86.8H567.5M565.0 78.9H567.5M565.0 70.9H567.5M565.0 63.0H567.5M563.0 55.1H567.5M565.0 47.2H567.5M565.0 39.2H567.5M565.0 31.3H567.5M563.0 23.4H567.5" stroke="#b0b0b0" stroke-width="1.3" fill="none"/>
<g clip-path="url(#c1l)" font-family="'Liberation Sans',Arial,sans-serif" font-size="14" fill="#f4f4f4" text-anchor="end">
<text x="559" y="313.7">10</text>
<text x="559" y="282.0">20</text>
<text x="559" y="250.3">30</text>
<text x="559" y="218.6">40</text>
<text x="559" y="186.9">50</text>
<text x="559" y="155.2">60</text>
<text x="559" y="123.5">70</text>
<text x="559" y="91.8">80</text>
<text x="559" y="60.1">90</text>
<text x="559" y="28.4">100</text>
</g>
<path d="M1126.5 340.4h4M1126.5 334.1h2M1126.5 327.7h2M1126.5 321.4h2M1126.5 315.0h2M1126.5 308.7h4M1126.5 302.4h2M1126.5 296.0h2M1126.5 289.7h2M1126.5 283.3h2M1126.5 277.0h4M1126.5 270.7h2M1126.5 264.3h2M1126.5 258.0h2M1126.5 251.6h2M1126.5 245.3h4M1126.5 239.0h2M1126.5 232.6h2M1126.5 226.3h2M1126.5 219.9h2M1126.5 213.6h4M1126.5 207.3h2M1126.5 200.9h2M1126.5 194.6h2M1126.5 188.2h2M1126.5 181.9h4M1126.5 175.6h2M1126.5 169.2h2M1126.5 162.9h2M1126.5 156.5h2M1126.5 150.2h4M1126.5 143.9h2M1126.5 137.5h2M1126.5 131.2h2M1126.5 124.8h2M1126.5 118.5h4M1126.5 112.2h2M1126.5 105.8h2M1126.5 99.5h2M1126.5 93.1h2M1126.5 86.8h4M1126.5 80.5h2M1126.5 74.1h2M1126.5 67.8h2M1126.5 61.4h2M1126.5 55.1h4M1126.5 48.8h2M1126.5 42.4h2M1126.5 36.1h2M1126.5 29.7h2M1126.5 23.4h4" stroke="#ff00ff" stroke-width="1.3" fill="none"/>
<g clip-path="url(#c1l)" font-family="'Liberation Sans',Arial,sans-serif" font-size="14" fill="#ff00ff">
<text x="1136" y="345.4">975</text>
<text x="1136" y="313.7">980</text>
<text x="1136" y="282.0">985</text>
<text x="1136" y="250.3">990</text>
<text x="1136" y="218.6">995</text>
<text x="1136" y="186.9">1000</text>
<text x="1136" y="155.2">1005</text>
<text x="1136" y="123.5">1010</text>
<text x="1136" y="91.8">1015</text>
<text x="1136" y="60.1">1020</text>
<text x="1136" y="28.4">1025</text>
</g>
<path d="M599.3 342v4M645.0 342v4M693.8 342v4M741.4 342v4M787.5 342v4M833.5 342v4M879.5 342v4M925.8 342v4M941.4 342v4M983.0 342v4M1028.2 342v4M1074.2 342v4M1104.6 342v4M576.4 342v2.5M587.8 342v2.5M610.7 342v2.5M622.1 342v2.5M633.6 342v2.5M657.2 342v2.5M669.4 342v2.5M681.6 342v2.5M705.7 342v2.5M717.6 342v2.5M729.5 342v2.5M752.9 342v2.5M764.5 342v2.5M776.0 342v2.5M799.0 342v2.5M810.5 342v2.5M822.0 342v2.5M845.0 342v2.5M856.5 342v2.5M868.0 342v2.5M891.1 342v2.5M902.6 342v2.5M914.2 342v2.5M951.8 342v2.5M962.2 342v2.5M972.6 342v2.5M994.3 342v2.5M1005.6 342v2.5M1016.9 342v2.5M1039.7 342v2.5M1051.2 342v2.5M1062.7 342v2.5M1084.3 342v2.5M1094.5 342v2.5M1114.7 342v2.5M1124.9 342v2.5" stroke="#9a9a9a" stroke-width="1" fill="none"/>
<g font-family="'Liberation Sans',Arial,sans-serif" font-size="8.3" font-weight="bold" fill="#f0f000" text-anchor="middle">
<text x="599.3" y="355.8">01</text>
<text x="645.0" y="355.8">02</text>
<text x="693.8" y="355.8">03</text>
<text x="741.4" y="355.8">04</text>
<text x="787.5" y="355.8">05</text>
<text x="833.5" y="355.8">06</text>
<text x="879.5" y="355.8">07</text>
<text x="925.8" y="355.8">08</text>
<text x="941.4" y="355.8">11</text>
<text x="983.0" y="355.8">12</text>
<text x="1028.2" y="355.8">13</text>
<text x="1074.2" y="355.8">14</text>
<text x="1104.6" y="355.8">17</text>
</g>
<g clip-path="url(#c1)">
<polyline points="568.0,298.0 585.0,298.0 586.5,230.0 587.6,198.5 589.8,257.0 591.8,234.5 593.4,239.5 595.5,204.4 597.0,215.0 599.0,196.0 600.5,174.6 601.8,205.0 603.8,204.4 606.0,238.7 607.3,250.4 609.7,233.6 611.0,250.4 612.7,240.0 615.5,227.8 618.3,262.8 620.5,233.6 621.5,257.0 624.4,257.0 627.7,280.0 629.4,240.0 630.8,240.0 632.0,261.0 633.0,256.8 635.0,257.6 637.3,281.9 638.3,269.3 639.4,285.0 640.8,269.3 641.6,282.0 643.3,257.6 645.0,263.5 646.5,251.0 648.6,269.0 651.6,269.0 652.8,317.0 654.0,333.7 655.7,338.7 657.8,338.7 658.3,282.0 660.3,275.0 661.5,234.0 662.8,234.0 664.0,280.0 665.4,263.5 666.7,301.0 668.7,240.0 670.0,240.0 671.7,308.6 672.9,327.0 674.2,292.0 675.7,318.6 677.9,281.0 679.2,309.4 941.4,309.4 942.5,250.0 943.5,230.0 945.4,163.0 946.7,250.0 947.8,198.5 949.0,226.0 950.4,122.8 951.8,200.0 952.6,175.0 954.0,225.0 955.5,182.0 956.7,267.0 958.4,158.0 960.0,210.0 963.6,258.0 965.0,250.0 967.0,140.0 968.5,140.0 970.0,196.0 972.6,205.0 974.8,168.0 976.0,170.0 978.5,210.0 981.5,117.0 982.7,192.0 984.3,93.0 986.9,186.0 989.0,112.0 990.2,108.0 991.4,93.0 993.0,199.0 995.0,178.0 996.5,182.0 998.2,164.0 999.4,186.8 1001.4,128.6 1003.0,170.0 1004.4,185.0 1006.0,180.0 1008.0,192.6 1009.5,172.0 1011.0,152.0 1012.8,169.0 1013.8,150.0 1015.0,123.6 1017.0,130.0 1017.8,175.0 1019.5,140.0 1020.8,98.5 1022.2,135.0 1023.6,123.0 1025.6,93.0 1027.0,150.0 1028.7,169.0 1030.0,158.0 1031.5,140.0 1033.5,160.0 1035.3,175.0 1037.5,150.0 1039.5,93.0 1041.2,207.0 1042.5,205.0 1045.4,217.0 1046.5,240.0 1049.6,275.0 1051.5,230.0 1053.7,175.0 1055.4,243.6 1057.5,200.0 1059.6,164.0 1062.0,250.0 1064.0,225.0 1066.0,180.0 1067.4,93.0 1068.8,164.0 1070.3,165.0 1071.8,129.5 1074.0,250.0 1076.3,205.0 1080.3,205.0 1080.7,151.7 1104.8,151.7 1105.4,98.5 1107.3,220.0 1108.6,111.0 1111.0,199.0 1112.3,76.0 1114.5,73.0 1116.8,52.5 1118.0,216.0 1120.6,128.6 1122.3,140.3" fill="none" stroke="#f2f2f2" stroke-width="1.9" stroke-linejoin="round" opacity="0.9" />
<polyline points="568.0,312.0 585.0,312.0 586.8,281.9 588.0,323.7 590.0,287.7 591.8,299.4 594.3,299.4 595.0,265.0 597.0,275.0 599.6,241.0 601.0,287.0 602.0,265.0 603.8,282.0 605.0,275.0 607.7,299.4 610.2,299.4 611.8,282.0 613.8,282.0 615.5,276.0 617.6,282.0 618.5,312.0 619.8,312.0 621.0,276.0 623.0,305.0 626.0,293.6 627.7,312.0 630.0,288.5 632.0,305.0 639.4,307.0 641.0,312.0 643.0,282.7 645.3,288.5 647.3,288.5 649.5,293.6 651.0,312.0 652.8,340.4 657.8,340.4 658.3,282.0 660.0,300.0 661.5,287.7 663.0,292.0 665.4,318.6 667.0,323.7 668.7,307.0 670.4,318.6 672.4,335.0 675.4,335.0 676.0,340.4 677.4,340.4 677.9,324.5 679.0,340.4 941.2,340.4 942.0,300.0 944.2,265.0 946.7,300.0 949.7,241.0 951.7,265.0 953.0,248.0 954.2,312.0 957.6,312.0 958.4,265.0 960.9,298.0 961.8,312.0 964.3,312.0 965.0,277.0 967.0,288.0 969.3,253.4 971.8,258.0 973.0,241.7 976.0,229.0 979.3,265.0 981.0,235.0 983.5,251.7 986.0,241.0 988.9,223.6 991.0,240.0 998.5,240.0 1000.0,252.0 1003.0,223.6 1004.4,258.7 1007.0,242.0 1011.0,276.0 1012.0,217.0 1012.8,241.0 1015.3,235.0 1017.0,252.0 1018.6,241.0 1022.0,258.7 1024.5,230.0 1027.0,227.8 1028.7,247.0 1032.0,217.7 1033.7,252.0 1036.2,235.0 1038.7,265.0 1040.4,247.0 1042.4,277.0 1045.4,300.0 1047.0,312.0 1048.7,323.7 1050.4,288.5 1053.0,288.5 1054.6,300.0 1057.0,265.0 1058.0,312.0 1059.6,265.0 1061.3,312.0 1063.8,312.0 1064.6,248.4 1066.3,265.0 1068.8,241.0 1071.3,298.6 1074.6,307.0 1077.0,282.0 1080.4,282.0 1080.8,246.7 1104.6,246.7 1104.9,276.0 1106.4,276.0 1107.8,211.0 1110.6,282.0 1114.0,228.0 1117.0,282.0 1119.0,235.0 1121.5,282.0 1123.6,265.0" fill="none" stroke="#b8e6b8" stroke-width="1.8" stroke-linejoin="round" opacity="0.88" />
<polyline points="568.0,322.8 573.4,312.0 585.0,312.0 589.3,297.0 594.3,287.0 597.6,275.0 601.8,256.0 604.3,260.0 607.7,270.0 611.0,283.5 613.5,283.0 616.9,276.0 619.4,281.0 623.5,289.4 626.9,292.0 629.4,293.6 632.7,297.0 636.0,295.0 641.0,302.0 644.4,297.0 647.8,289.4 650.3,292.0 653.6,308.6 656.0,325.0 658.7,333.7 661.0,322.0 664.5,305.0 667.0,301.0 669.5,305.0 672.9,315.0 677.0,325.0 680.4,332.0 686.0,341.0 941.3,341.0 943.4,318.6 946.7,298.6 950.0,273.5 953.4,266.8 957.6,275.0 962.6,285.0 966.0,282.0 970.0,263.5 974.3,246.7 977.7,241.7 985.0,241.0 991.0,229.0 994.0,232.5 997.0,232.0 1002.7,230.0 1007.0,235.0 1012.0,237.8 1016.0,236.0 1020.3,235.0 1026.0,230.0 1029.0,226.0 1032.0,220.0 1034.5,227.8 1037.0,226.0 1040.4,241.0 1043.7,263.5 1047.0,288.5 1050.4,300.0 1054.6,295.0 1058.8,280.0 1062.0,287.0 1065.5,275.0 1068.8,268.5 1072.0,251.0 1075.5,270.0 1079.7,290.0 1082.0,275.0 1085.5,255.0 1088.9,246.7 1104.0,246.7 1107.3,253.4 1110.7,250.0 1114.8,239.0 1118.0,248.4 1119.8,241.7 1123.0,252.6" fill="none" stroke="#22e022" stroke-width="1.5" stroke-linejoin="round" />
<polyline points="686.0,340.8 941.2,340.8" fill="none" stroke="#a8e8a8" stroke-width="1.5" stroke-linejoin="round" />
<polyline points="568.5,150.9 585.0,150.9 587.0,154.0 590.0,155.0 592.0,153.5 595.0,154.0 598.0,156.5 601.0,155.5 605.0,155.0 609.0,156.0 612.0,157.0 615.0,159.0 618.0,157.5 622.0,158.5 627.0,158.0 630.0,159.5 635.0,158.5 640.0,160.0 645.0,161.0 650.0,159.5 655.0,160.5 660.0,161.5 665.0,161.0 670.0,162.5 673.0,162.0 676.0,160.5 679.0,161.7 941.4,161.7 941.9,152.0 944.0,150.3 946.0,151.9 948.2,152.2 950.4,152.4 952.6,152.8 954.8,152.2 957.0,152.7 959.2,150.4 961.4,151.5 963.6,152.8 965.8,152.0 968.0,152.6 970.2,150.6 972.4,151.5 974.6,150.9 976.8,151.7 979.0,151.8 981.2,150.3 983.4,150.9 985.6,151.0 987.8,152.7 990.0,152.3 992.2,150.7 994.4,152.4 996.6,150.7 998.8,151.9 1001.0,151.4 1003.2,151.1 1005.4,153.4 1007.6,151.6 1009.8,151.7 1012.0,153.7 1014.2,153.4 1016.4,151.9 1018.6,153.6 1020.8,151.7 1023.0,152.1 1025.2,150.8 1027.4,152.7 1029.6,152.1 1031.8,152.8 1034.0,152.6 1036.2,151.1 1038.4,151.2 1040.6,150.7 1042.8,150.7 1045.0,150.5 1047.2,151.1 1049.4,151.9 1051.6,150.3 1053.8,152.1 1056.0,151.2 1058.2,151.1 1060.4,151.6 1062.6,150.7 1064.8,150.3 1067.0,150.8 1069.2,151.3 1071.4,149.6 1073.6,152.0 1075.8,149.6 1078.0,151.4 1080.4,150.0 1080.8,117.0 1104.8,117.0 1106.0,118.5 1108.0,117.0 1110.0,120.0 1112.0,121.0 1115.0,119.0 1117.0,122.0 1119.0,117.5 1120.5,116.0 1122.5,119.0" fill="none" stroke="#ff18ff" stroke-width="1.7" stroke-linejoin="round" />
</g>
<g font-family="'Liberation Serif','Times New Roman',serif">
<text x="503.4" y="15.2" fill="#fff" font-size="13.5" textLength="57" lengthAdjust="spacing">Gustspeed</text>
<text x="617.3" y="15.2" fill="#fff" font-size="13.5" textLength="46.8" lengthAdjust="spacing">62.9 kmh</text>
<text x="666.3" y="15.2" fill="#00ff00" font-size="13.5" textLength="34.2" lengthAdjust="spacing">Avspd</text>
<text x="729.5" y="15.2" fill="#00ff00" font-size="13.5" textLength="46.5" lengthAdjust="spacing">27.8 kmh</text>
<text x="780" y="15.2" fill="#ffff00" font-size="13.5" textLength="26" lengthAdjust="spacing">18:15</text>
<text x="972.3" y="15.2" fill="#ff00ff" font-size="13.5" textLength="56.6" lengthAdjust="spacing">Barometer</text>
<text x="1078.2" y="15.2" fill="#ff00ff" font-size="13.5" textLength="55.8" lengthAdjust="spacing">1009.8 hPa</text>
</g>
<rect x="558.5" y="359.3" width="568.0" height="104.19999999999999" fill="url(#pg)"/>
<path d="M558.5 359.3V463.5" stroke="#c4c4c4" stroke-width="1.3" fill="none"/><path d="M557.9 463.0H1126.5" stroke="#b4b4b4" stroke-width="2" fill="none"/>
<g clip-path="url(#c2)">
<polyline points="559.0,406.0 576.0,406.0 576.8,447.0 577.5,460.0 579.3,460.0 580.8,446.0 582.0,438.0 583.5,446.0 585.2,436.0 586.7,440.0 587.9,432.0 589.4,456.0 591.3,446.0 592.9,446.0 594.0,438.0 595.2,432.0 596.4,444.0 598.0,460.0 597.9,380.0 599.4,380.0 600.0,440.0 600.7,446.0 602.5,438.0 603.8,448.0 605.3,436.0 606.7,448.0 608.2,438.0 610.0,436.0 611.7,452.0 613.4,438.0 614.8,436.0 616.3,436.0 617.7,448.0 619.1,432.0 619.4,368.0 620.9,368.0 621.5,440.0 622.2,432.0 623.5,432.0 624.9,456.0 626.4,446.0 628.0,448.0 629.4,448.0 630.7,456.0 632.4,436.0 633.6,436.0 634.7,460.0 636.5,440.0 638.1,444.0 639.6,444.0 641.5,440.0 642.9,456.0 644.5,368.1 646.2,443.6 647.0,457.0 649.5,373.4 650.8,455.4 653.3,443.6 654.5,460.4 655.0,390.1 657.0,448.7 658.7,375.1 660.4,450.3 661.7,363.0 662.4,455.4 664.0,383.4 665.4,455.4 665.7,386.0 667.1,437.0 670.1,363.0 672.1,366.7 672.9,411.9 940.5,411.9 941.0,455.0 943.3,429.3 944.5,452.7 946.1,424.7 948.0,441.0 949.9,413.0 951.5,448.0 953.1,407.2 955.0,422.3 956.9,434.0 958.5,394.3 960.1,420.0 961.5,392.0 963.2,375.7 963.9,443.3 965.5,457.3 966.7,448.0 968.5,459.7 970.9,448.0 972.5,438.7 974.8,446.8 977.2,437.5 980.2,441.0 982.5,448.0 984.9,452.7 987.7,438.7 990.0,443.3 992.3,437.5 994.7,442.2 997.0,427.0 999.3,452.7 1001.7,431.7 1004.5,439.8 1007.5,437.5 1009.8,442.2 1012.2,439.8 1014.5,443.3 1016.8,452.7 1019.2,446.8 1022.0,428.2 1023.8,439.8 1026.2,443.3 1029.2,431.7 1030.8,448.0 1032.5,436.3 1034.8,453.8 1036.7,443.3 1037.8,451.5 1040.2,438.7 1042.5,427.0 1044.8,408.3 1047.2,378.0 1048.3,364.0 1050.2,380.3 1051.8,420.0 1053.5,459.7 1054.9,396.7 1056.5,364.0 1057.7,385.0 1059.3,459.7 1060.7,443.3 1062.3,380.3 1063.5,427.0 1065.1,424.7 1066.5,459.7 1068.2,450.3 1069.8,452.7 1071.7,431.7 1073.5,396.7 1075.2,369.8 1076.8,420.0 1078.2,459.7 1079.1,411.8 1081.5,411.8 1082.2,381.5 1106.7,381.5 1107.4,422.3 1108.5,366.3 1109.5,445.7 1111.3,431.7 1113.0,366.3 1114.8,443.3 1117.9,442.2 1120.2,396.7 1121.8,369.8 1123.5,457.3 1125.3,438.7 1126.5,401.3" fill="none" stroke="#f0e018" stroke-width="1.6" stroke-linejoin="round" />
</g>
<g font-family="'Liberation Serif','Times New Roman',serif" font-size="13" fill="#ffff00">
<text x="1146" y="368">S</text>
<text x="1146" y="390">E</text>
<text x="1146" y="413.5">N</text>
<text x="1146" y="435">W</text>
<text x="1146" y="459">S</text>
<text x="1164.5" y="413.5" font-size="12">38</text>
</g>
<g clip-path="url(#c4)" font-family="'Liberation Serif','Times New Roman',serif">
<text x="606.7" y="471.5" fill="#8888ff" font-size="11" textLength="37.8" lengthAdjust="spacing">Humidity</text><text x="681.2" y="471.5" fill="#8888ff" font-size="11" textLength="22.3" lengthAdjust="spacing">69 %</text>
<text x="951.7" y="472.5" fill="#00ff00" font-size="11" textLength="54.8" lengthAdjust="spacing">Temperature</text><text x="1044.5" y="472.5" fill="#00ff00" font-size="11" textLength="23.8" lengthAdjust="spacing">7.6°C</text>
</g>
<g font-family="'Liberation Serif','Times New Roman',serif">
<text x="501" y="481" fill="#ff0000" font-size="13.5" textLength="40" lengthAdjust="spacing">Rainfall</text><text x="561.5" y="481" fill="#ff0000" font-size="13.5" textLength="35.5" lengthAdjust="spacing">0.0 mm</text>
<text x="1092.6" y="480.4" fill="#ff00ff" font-size="14" textLength="56.6" lengthAdjust="spacing">Dew Point</text><text x="1161" y="480.4" fill="#ff00ff" font-size="14" textLength="29" lengthAdjust="spacing">2.2°C</text>
</g>
<rect x="569.5" y="494.3" width="557.0" height="292.2" fill="url(#pg)"/>
<path d="M602.0 494.3V786.5M648.0 494.3V786.5M695.5 494.3V786.5M743.0 494.3V786.5M789.0 494.3V786.5M835.0 494.3V786.5M881.0 494.3V786.5M926.5 494.3V786.5M942.0 494.3V786.5M982.5 494.3V786.5M1028.0 494.3V786.5M1074.4 494.3V786.5M1104.4 494.3V786.5M569.5 756.0H1126.5M569.5 727.4H1126.5M569.5 698.7H1126.5M569.5 670.0H1126.5M569.5 641.4H1126.5M569.5 612.7H1126.5M569.5 584.0H1126.5M569.5 555.3H1126.5M569.5 526.7H1126.5M569.5 498.0H1126.5" stroke="#e8e8e8" stroke-width="1" stroke-dasharray="1 1.5" fill="none" opacity="0.36"/>
<path d="M570.2 494.3V787.2H1126.5" stroke="#e6e6e6" stroke-width="2" fill="none"/>
<path d="M1126.5 494.3V787.5" stroke="#e0e0e0" stroke-width="1.4" fill="none"/>
<path d="M540 494.3V786.5M535 783.7H540M537 778.0H540M537 772.2H540M537 766.5H540M537 760.8H540M535 755.0H540M537 749.3H540M537 743.6H540M537 737.8H540M537 732.1H540M535 726.4H540M537 720.6H540M537 714.9H540M537 709.2H540M537 703.4H540M535 697.7H540M537 692.0H540M537 686.2H540M537 680.5H540M537 674.8H540M535 669.0H540M537 663.3H540M537 657.6H540M537 651.8H540M537 646.1H540M535 640.4H540M537 634.6H540M537 628.9H540M537 623.1H540M537 617.4H540M535 611.7H540M537 605.9H540M537 600.2H540M537 594.5H540M537 588.7H540M535 583.0H540M537 577.3H540M537 571.5H540M537 565.8H540M537 560.1H540M535 554.3H540M537 548.6H540M537 542.9H540M537 537.1H540M537 531.4H540M535 525.7H540M537 519.9H540M537 514.2H540M537 508.5H540M537 502.7H540M535 497.0H540" stroke="#8080ff" stroke-width="1.6" fill="none"/>
<g clip-path="url(#c3l)" font-family="'Liberation Sans',Arial,sans-serif" font-size="14" fill="#8080ff" text-anchor="end">
<text x="532.7" y="788.7">0</text>
<text x="532.7" y="760.0">10</text>
<text x="532.7" y="731.4">20</text>
<text x="532.7" y="702.7">30</text>
<text x="532.7" y="674.0">40</text>
<text x="532.7" y="645.4">50</text>
<text x="532.7" y="616.7">60</text>
<text x="532.7" y="588.0">70</text>
<text x="532.7" y="559.3">80</text>
<text x="532.7" y="530.7">90</text>
<text x="532.7" y="502.0">100</text>
</g>
<path d="M565.0 783.7H569.5M567.0 774.1H569.5M567.0 764.6H569.5M567.0 755.0H569.5M567.0 745.5H569.5M565.0 735.9H569.5M567.0 726.4H569.5M567.0 716.8H569.5M567.0 707.3H569.5M567.0 697.7H569.5M565.0 688.1H569.5M567.0 678.6H569.5M567.0 669.0H569.5M567.0 659.5H569.5M567.0 649.9H569.5M565.0 640.4H569.5M567.0 630.8H569.5M567.0 621.2H569.5M567.0 611.7H569.5M567.0 602.1H569.5M565.0 592.6H569.5M567.0 583.0H569.5M567.0 573.5H569.5M567.0 563.9H569.5M567.0 554.4H569.5M565.0 544.8H569.5M567.0 535.2H569.5M567.0 525.7H569.5M567.0 516.1H569.5M567.0 506.6H569.5M565.0 497.0H569.5" stroke="#ff0000" stroke-width="1.3" fill="none"/>
<g clip-path="url(#c3l)" font-family="'Liberation Sans',Arial,sans-serif" font-size="14" fill="#ff0000" text-anchor="end">
<text x="563.5" y="788.7">0</text>
<text x="563.5" y="740.9">5</text>
<text x="563.5" y="693.1">10</text>
<text x="563.5" y="645.4">15</text>
<text x="563.5" y="597.6">20</text>
<text x="563.5" y="549.8">25</text>
<text x="563.5" y="502.0">30</text>
</g>
<path d="M1126.5 783.7h4M1126.5 778.0h2M1126.5 772.2h2M1126.5 766.5h2M1126.5 760.8h2M1126.5 755.0h4M1126.5 749.3h2M1126.5 743.6h2M1126.5 737.8h2M1126.5 732.1h2M1126.5 726.4h4M1126.5 720.6h2M1126.5 714.9h2M1126.5 709.2h2M1126.5 703.4h2M1126.5 697.7h4M1126.5 692.0h2M1126.5 686.2h2M1126.5 680.5h2M1126.5 674.8h2M1126.5 669.0h4M1126.5 663.3h2M1126.5 657.6h2M1126.5 651.8h2M1126.5 646.1h2M1126.5 640.4h4M1126.5 634.6h2M1126.5 628.9h2M1126.5 623.1h2M1126.5 617.4h2M1126.5 611.7h4M1126.5 605.9h2M1126.5 600.2h2M1126.5 594.5h2M1126.5 588.7h2M1126.5 583.0h4M1126.5 577.3h2M1126.5 571.5h2M1126.5 565.8h2M1126.5 560.1h2M1126.5 554.3h4M1126.5 548.6h2M1126.5 542.9h2M1126.5 537.1h2M1126.5 531.4h2M1126.5 525.7h4M1126.5 519.9h2M1126.5 514.2h2M1126.5 508.5h2M1126.5 502.7h2M1126.5 497.0h4" stroke="#00ee00" stroke-width="1.3" fill="none"/>
<g clip-path="url(#c3l)" font-family="'Liberation Sans',Arial,sans-serif" font-size="14" fill="#00ff00">
<text x="1135.8" y="788.7">-10</text>
<text x="1135.8" y="760.0">-5</text>
<text x="1136.3" y="731.4">0</text>
<text x="1136.3" y="702.7">5</text>
<text x="1136.3" y="674.0">10</text>
<text x="1136.3" y="645.4">15</text>
<text x="1136.3" y="616.7">20</text>
<text x="1136.3" y="588.0">25</text>
<text x="1136.3" y="559.3">30</text>
<text x="1136.3" y="530.7">35</text>
<text x="1136.3" y="502.0">40</text>
</g>
<path d="M602.0 787.5v4M648.0 787.5v4M695.5 787.5v4M743.0 787.5v4M789.0 787.5v4M835.0 787.5v4M881.0 787.5v4M926.5 787.5v4M942.0 787.5v4M982.5 787.5v4M1028.0 787.5v4M1074.4 787.5v4M1104.4 787.5v4M578.4 787.5v2.5M589.8 787.5v2.5M612.7 787.5v2.5M624.1 787.5v2.5M635.6 787.5v2.5M659.2 787.5v2.5M671.4 787.5v2.5M683.6 787.5v2.5M707.7 787.5v2.5M719.6 787.5v2.5M731.5 787.5v2.5M754.9 787.5v2.5M766.5 787.5v2.5M778.0 787.5v2.5M801.0 787.5v2.5M812.5 787.5v2.5M824.0 787.5v2.5M847.0 787.5v2.5M858.5 787.5v2.5M870.0 787.5v2.5M893.1 787.5v2.5M904.6 787.5v2.5M916.2 787.5v2.5M953.8 787.5v2.5M964.2 787.5v2.5M974.6 787.5v2.5M996.3 787.5v2.5M1007.6 787.5v2.5M1018.9 787.5v2.5M1041.7 787.5v2.5M1053.2 787.5v2.5M1064.7 787.5v2.5M1086.3 787.5v2.5M1096.5 787.5v2.5M1116.7 787.5v2.5M1126.9 787.5v2.5" stroke="#9a9a9a" stroke-width="1" fill="none"/>
<g font-family="'Liberation Sans',Arial,sans-serif" font-size="8.3" font-weight="bold" fill="#f0f000" text-anchor="middle">
<text x="602.0" y="800.5">01</text>
<text x="648.0" y="800.5">02</text>
<text x="695.5" y="800.5">03</text>
<text x="743.0" y="800.5">04</text>
<text x="789.0" y="800.5">05</text>
<text x="835.0" y="800.5">06</text>
<text x="881.0" y="800.5">07</text>
<text x="926.5" y="800.5">08</text>
<text x="942.0" y="800.5">11</text>
<text x="982.5" y="800.5">12</text>
<text x="1028.0" y="800.5">13</text>
<text x="1074.4" y="800.5">14</text>
<text x="1104.4" y="800.5">17</text>
</g>
<g clip-path="url(#c3)">
<polyline points="572.0,499.8 1080.8,499.8 1081.0,582.8 1104.5,582.8 1105.4,578.7 1106.7,583.7 1107.5,575.3 1108.7,591.7 1111.7,590.4 1112.9,582.0 1115.4,577.0 1117.6,566.1 1119.1,575.3 1120.7,580.3 1122.1,577.8 1123.4,584.5" fill="none" stroke="#8080ff" stroke-width="1.3" stroke-linejoin="round" />
<path d="M905 757V785M1104.4 757V785" stroke="#c8c020" stroke-width="1" stroke-dasharray="1 1" opacity="0.8"/>
<polyline points="571.0,733.0 586.0,733.0 589.0,731.5 603.0,731.5 612.0,730.5 622.0,729.7 665.5,729.7 672.0,731.5 679.0,733.0 942.0,733.0 942.4,739.0 944.0,740.0 947.0,740.6 950.0,741.0 953.0,740.0 956.0,740.8 960.0,740.6 964.0,741.6 970.0,744.0 975.0,743.6 980.0,742.0 986.0,739.6 990.0,740.6 994.0,741.6 1004.0,741.0 1012.0,740.4 1020.0,739.6 1030.0,741.6 1040.0,740.0 1048.0,738.4 1056.0,739.6 1064.0,741.0 1068.0,743.6 1074.0,743.0 1080.0,742.4 1080.8,713.6 1104.0,713.6 1106.0,712.4 1108.0,715.6 1111.0,716.6 1114.0,713.0 1117.0,710.0 1119.0,713.6 1123.0,714.0" fill="none" stroke="#e010e0" stroke-width="1.9" stroke-linejoin="round" />
<polyline points="571.0,730.5 587.0,730.5 590.3,728.0 601.0,728.0 603.7,727.2 672.0,727.2 676.0,729.0 680.6,730.8 942.0,731.0 942.4,735.6 944.0,737.0 950.0,737.6 955.0,737.0 960.0,737.0 965.0,738.4 970.0,741.0 975.0,740.4 980.0,739.0 986.0,736.6 994.0,738.4 1004.0,738.4 1012.0,737.6 1020.0,737.0 1030.0,738.4 1040.0,737.0 1048.0,735.6 1056.0,737.0 1064.0,738.4 1068.0,740.6 1074.0,740.2 1080.0,740.0 1080.8,684.0 1106.0,684.0 1107.6,684.8 1109.0,682.0 1112.0,683.6 1117.0,686.0 1120.0,684.4 1123.0,683.6" fill="none" stroke="#10d810" stroke-width="2.1" stroke-linejoin="round" />
<path d="M571 784H1125" stroke="#ff0000" stroke-width="2.4"/>
</g>
<g font-family="'Liberation Sans',Arial,sans-serif" font-size="10.2" fill="#e4dc24">
<text x="888" y="756.4">SunRise</text><text x="1090.4" y="756.4">SunSet</text>
</g>
</svg>
</body></html>
